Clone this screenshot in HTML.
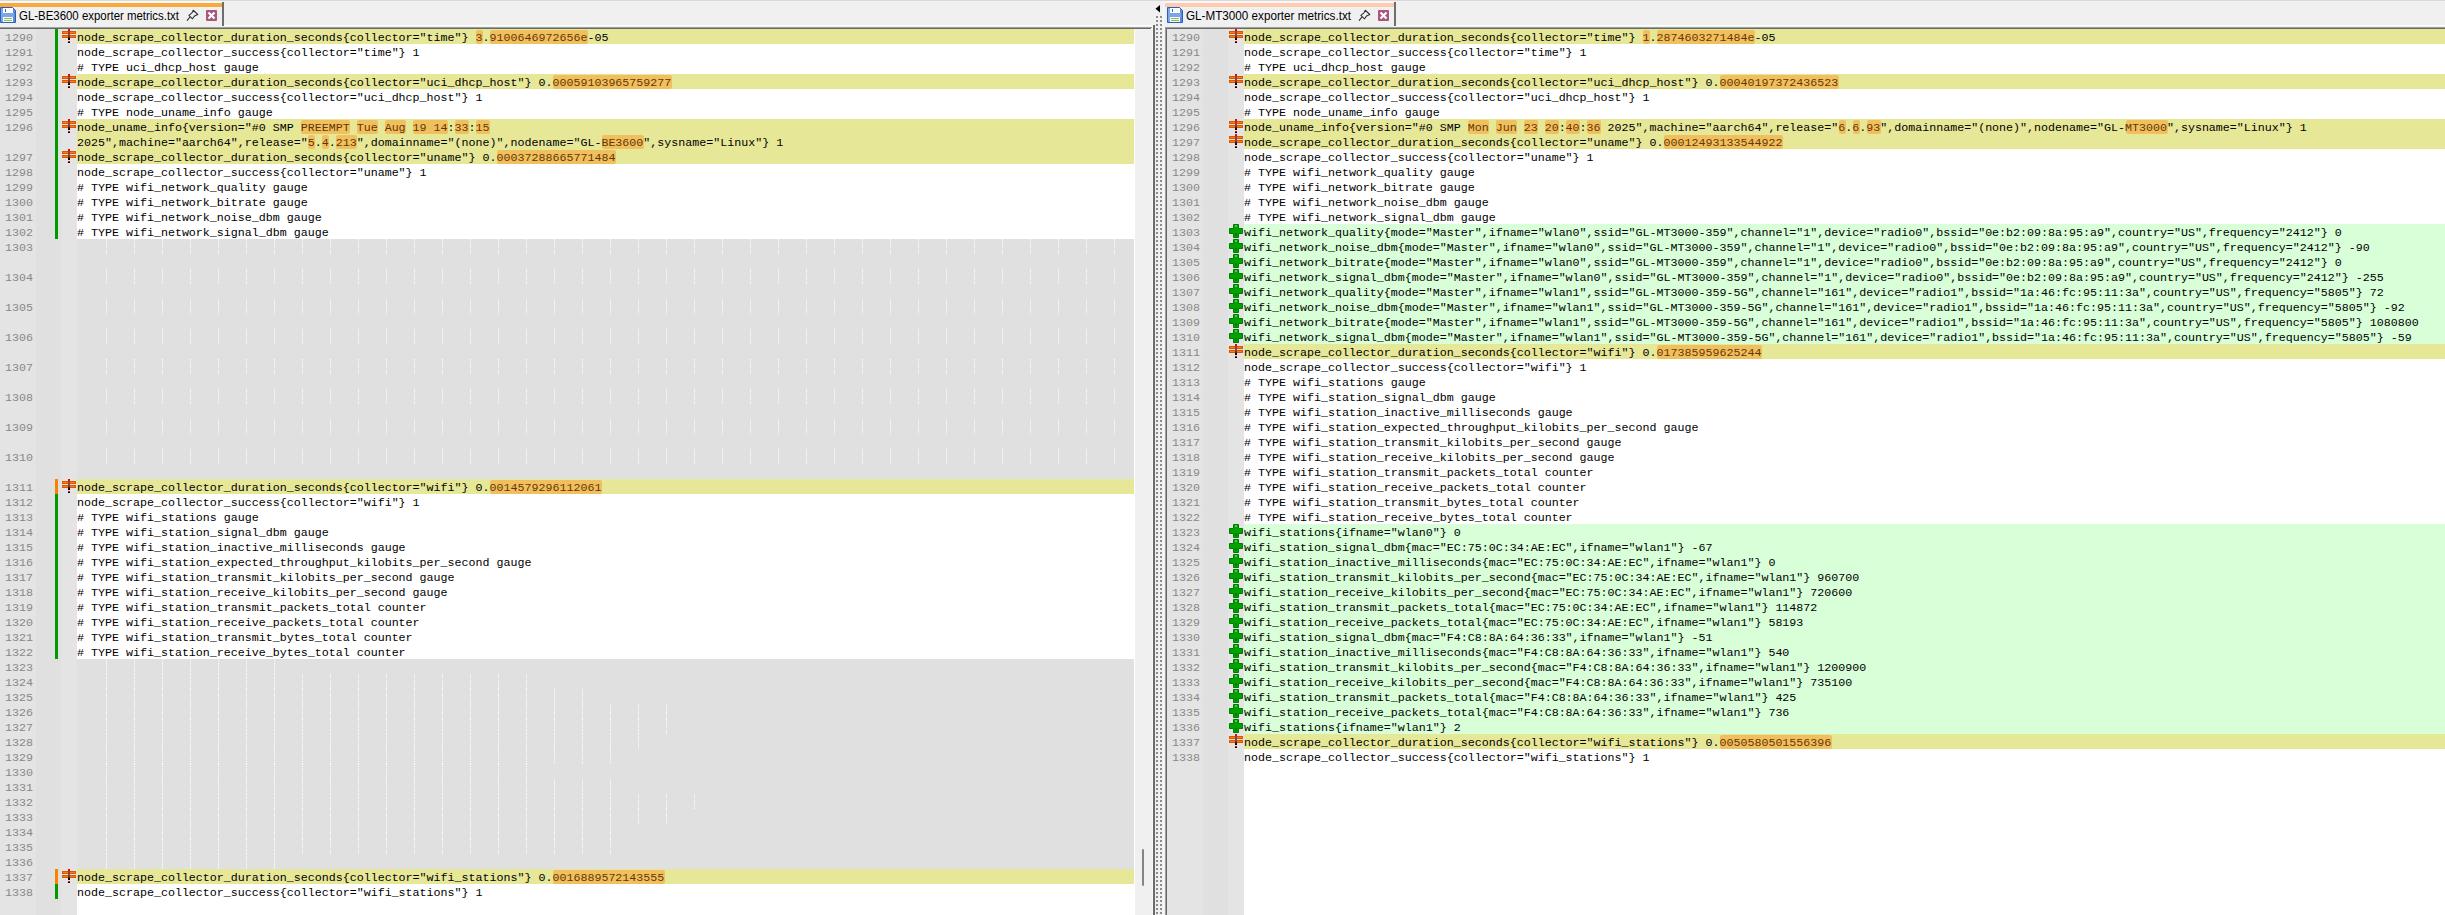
<!DOCTYPE html>
<html><head><meta charset="utf-8"><title>Compare</title><style>
html,body{margin:0;padding:0;}
body{width:2445px;height:915px;overflow:hidden;position:relative;background:#f0f0f0;font-family:"Liberation Sans",sans-serif;}
div{position:absolute;}
.tx,.ln{font-family:"Liberation Mono",monospace;font-size:11.67px;letter-spacing:-0.0031px;line-height:15px;height:15px;white-space:pre;color:#000;}
.ln{color:#888888;}
.hl{height:14px;background:rgba(255,131,6,0.39);border-radius:2px;}
.ig{width:1px;height:15px;background:repeating-linear-gradient(to bottom,#ffffff 0,#ffffff 1px,transparent 1px,transparent 2px);}
.mk{width:14px;height:3px;background:#ff7a10;box-shadow:inset 0 0 0 1px #d85800;}
.mv{width:2px;height:11px;background:linear-gradient(to bottom,#f00000 0,#f00000 12%,#9a3a48 22%,#84404c 60%,#402028 78%,#000 92%);}
.md{width:2px;height:2px;background:linear-gradient(to bottom,#ff0000 50%,#000 50%);}
.pv{width:6px;height:14px;background:#00a000;box-shadow:inset 0 0 0 1px #007800;}
.ph{width:14px;height:6px;background:#00a000;box-shadow:inset 0 0 0 1px #007800;}
.plus{position:absolute;}
.tab{font-family:"Liberation Sans",sans-serif;white-space:pre;color:#000;line-height:16px;}
.dot{width:2px;height:2px;background:#8c8c8c;}
</style></head>
<body>
<div style="left:0;top:0;width:2445px;height:1px;background:#d9d9d9"></div>
<div style="left:224px;top:25px;width:929px;height:1px;background:#ffffff"></div>
<div style="left:1396px;top:25px;width:1049px;height:1px;background:#ffffff"></div>
<div style="left:0;top:1px;width:222px;height:2px;background:#f8f8f8"></div>
<div style="left:0;top:3px;width:222px;height:4px;background:#faaa3c"></div>
<div style="left:222px;top:2px;width:2px;height:24px;background:#6e6e6e"></div>
<svg style="position:absolute;left:0px;top:7px" width="16" height="16" viewBox="0 0 16 16">
<path d="M0.5 0.5 H12.5 L15.5 3.5 V15.5 H0.5 Z" fill="#5a8ad8" stroke="#2c5fb8" stroke-width="1"/>
<rect x="1.5" y="1.5" width="1" height="13" fill="#a8c8f0"/>
<rect x="3" y="1" width="10" height="5" fill="#ffffff"/>
<rect x="5" y="2" width="1" height="3" fill="#3a6cc0"/>
<rect x="2" y="6" width="12" height="4" fill="#7aa6e8"/>
<rect x="3" y="10" width="10" height="5" fill="#ffffff"/>
<rect x="4" y="11" width="8" height="1" fill="#7cc060"/>
<rect x="4" y="13" width="8" height="1" fill="#7cc060"/>
</svg>
<div class="tab" style="left:19px;top:8px;font-size:12.5px;transform:scaleX(0.914);transform-origin:0 0">GL-BE3600 exporter metrics.txt</div>
<svg style="position:absolute;left:184px;top:7px" width="18" height="18" viewBox="0 0 18 18">
<path d="M9.25 3.25 L7.9 5.9 L4.9 8.3 L8.5 11.8 L10.6 8.9 L13.8 7.5 Z" fill="none" stroke="#303030" stroke-width="1.05" stroke-linejoin="round"/>
<path d="M5.9 10.2 L3.0 13.6" stroke="#303030" stroke-width="1.1"/>
</svg>
<svg style="position:absolute;left:206px;top:10px" width="11" height="11" viewBox="0 0 11 11">
<rect x="0" y="0" width="11" height="11" rx="1" fill="#a8567c"/>
<path d="M2.5 2.5 L8.5 8.5 M8.5 2.5 L2.5 8.5" stroke="#ffffff" stroke-width="2.2"/>
</svg>
<div style="left:1165px;top:1px;width:229px;height:2px;background:#f8f8f8"></div>
<div style="left:1165px;top:3px;width:229px;height:4px;background:#ffcab0"></div>
<div style="left:1394px;top:2px;width:2px;height:24px;background:#6e6e6e"></div>
<svg style="position:absolute;left:1167px;top:7px" width="16" height="16" viewBox="0 0 16 16">
<path d="M0.5 0.5 H12.5 L15.5 3.5 V15.5 H0.5 Z" fill="#5a8ad8" stroke="#2c5fb8" stroke-width="1"/>
<rect x="1.5" y="1.5" width="1" height="13" fill="#a8c8f0"/>
<rect x="3" y="1" width="10" height="5" fill="#ffffff"/>
<rect x="5" y="2" width="1" height="3" fill="#3a6cc0"/>
<rect x="2" y="6" width="12" height="4" fill="#7aa6e8"/>
<rect x="3" y="10" width="10" height="5" fill="#ffffff"/>
<rect x="4" y="11" width="8" height="1" fill="#7cc060"/>
<rect x="4" y="13" width="8" height="1" fill="#7cc060"/>
</svg>
<div class="tab" style="left:1186px;top:8px;font-size:12.5px;transform:scaleX(0.935);transform-origin:0 0">GL-MT3000 exporter metrics.txt</div>
<svg style="position:absolute;left:1356px;top:7px" width="18" height="18" viewBox="0 0 18 18">
<path d="M9.25 3.25 L7.9 5.9 L4.9 8.3 L8.5 11.8 L10.6 8.9 L13.8 7.5 Z" fill="none" stroke="#303030" stroke-width="1.05" stroke-linejoin="round"/>
<path d="M5.9 10.2 L3.0 13.6" stroke="#303030" stroke-width="1.1"/>
</svg>
<svg style="position:absolute;left:1378px;top:10px" width="11" height="11" viewBox="0 0 11 11">
<rect x="0" y="0" width="11" height="11" rx="1" fill="#a8567c"/>
<path d="M2.5 2.5 L8.5 8.5 M8.5 2.5 L2.5 8.5" stroke="#ffffff" stroke-width="2.2"/>
</svg>
<div style="left:0;top:27px;width:1152px;height:1px;background:#a0a0a0"></div>
<div style="left:0;top:28px;width:1151px;height:1px;background:#696969"></div>
<div style="left:1165px;top:27px;width:1280px;height:1px;background:#a0a0a0"></div>
<div style="left:1165px;top:28px;width:1280px;height:1px;background:#696969"></div>
<div style="left:1165px;top:27px;width:1px;height:888px;background:#a0a0a0"></div>
<div style="left:1166px;top:28px;width:1px;height:887px;background:#696969"></div>
<div style="left:0px;top:29px;width:36px;height:886px;background:#e4e4e4"></div>
<div style="left:36px;top:29px;width:25px;height:886px;background:#e0e0e0"></div>
<div style="left:61px;top:29px;width:16px;height:886px;background:#e4e4e4"></div>
<div style="left:77px;top:29px;width:1057px;height:886px;background:#ffffff"></div>
<div style="left:77px;top:29px;width:1057px;height:15px;background:#e7e798"></div>
<div class="ln" style="left:5px;top:31px">1290</div>
<div style="left:55px;top:29px;width:3px;height:15px;background:#009900"></div>
<div class="mk" style="left:62px;top:31px"></div><div class="mk" style="left:62px;top:35px"></div><div class="mv" style="left:68px;top:29px"></div><div class="md" style="left:68px;top:41px"></div>
<div class="tx" style="left:77px;top:31px">node_scrape_collector_duration_seconds{collector=&quot;time&quot;} 3.9100646972656e-05</div>
<div class="hl" style="left:476px;top:30px;width:7px"></div>
<div class="hl" style="left:490px;top:30px;width:98px"></div>
<div class="ln" style="left:5px;top:46px">1291</div>
<div style="left:55px;top:44px;width:3px;height:15px;background:#009900"></div>
<div class="tx" style="left:77px;top:46px">node_scrape_collector_success{collector=&quot;time&quot;} 1</div>
<div class="ln" style="left:5px;top:61px">1292</div>
<div style="left:55px;top:59px;width:3px;height:15px;background:#009900"></div>
<div class="tx" style="left:77px;top:61px"># TYPE uci_dhcp_host gauge</div>
<div style="left:77px;top:74px;width:1057px;height:15px;background:#e7e798"></div>
<div class="ln" style="left:5px;top:76px">1293</div>
<div style="left:55px;top:74px;width:3px;height:15px;background:#009900"></div>
<div class="mk" style="left:62px;top:76px"></div><div class="mk" style="left:62px;top:80px"></div><div class="mv" style="left:68px;top:74px"></div><div class="md" style="left:68px;top:86px"></div>
<div class="tx" style="left:77px;top:76px">node_scrape_collector_duration_seconds{collector=&quot;uci_dhcp_host&quot;} 0.00059103965759277</div>
<div class="hl" style="left:553px;top:75px;width:119px"></div>
<div class="ln" style="left:5px;top:91px">1294</div>
<div style="left:55px;top:89px;width:3px;height:15px;background:#009900"></div>
<div class="tx" style="left:77px;top:91px">node_scrape_collector_success{collector=&quot;uci_dhcp_host&quot;} 1</div>
<div class="ln" style="left:5px;top:106px">1295</div>
<div style="left:55px;top:104px;width:3px;height:15px;background:#009900"></div>
<div class="tx" style="left:77px;top:106px"># TYPE node_uname_info gauge</div>
<div style="left:77px;top:119px;width:1057px;height:15px;background:#e7e798"></div>
<div class="ln" style="left:5px;top:121px">1296</div>
<div style="left:55px;top:119px;width:3px;height:15px;background:#009900"></div>
<div class="mk" style="left:62px;top:121px"></div><div class="mk" style="left:62px;top:125px"></div><div class="mv" style="left:68px;top:119px"></div><div class="md" style="left:68px;top:131px"></div>
<div class="tx" style="left:77px;top:121px">node_uname_info{version=&quot;#0 SMP PREEMPT Tue Aug 19 14:33:15</div>
<div class="hl" style="left:301px;top:120px;width:49px"></div>
<div class="hl" style="left:357px;top:120px;width:21px"></div>
<div class="hl" style="left:385px;top:120px;width:21px"></div>
<div class="hl" style="left:413px;top:120px;width:35px"></div>
<div class="hl" style="left:455px;top:120px;width:14px"></div>
<div class="hl" style="left:476px;top:120px;width:14px"></div>
<div style="left:77px;top:134px;width:1057px;height:15px;background:#e7e798"></div>
<div style="left:55px;top:134px;width:3px;height:15px;background:#009900"></div>
<div class="tx" style="left:77px;top:136px">2025&quot;,machine=&quot;aarch64&quot;,release=&quot;5.4.213&quot;,domainname=&quot;(none)&quot;,nodename=&quot;GL-BE3600&quot;,sysname=&quot;Linux&quot;} 1</div>
<div class="hl" style="left:308px;top:135px;width:7px"></div>
<div class="hl" style="left:322px;top:135px;width:7px"></div>
<div class="hl" style="left:336px;top:135px;width:21px"></div>
<div class="hl" style="left:602px;top:135px;width:42px"></div>
<div style="left:77px;top:149px;width:1057px;height:15px;background:#e7e798"></div>
<div class="ln" style="left:5px;top:151px">1297</div>
<div style="left:55px;top:149px;width:3px;height:15px;background:#009900"></div>
<div class="mk" style="left:62px;top:151px"></div><div class="mk" style="left:62px;top:155px"></div><div class="mv" style="left:68px;top:149px"></div><div class="md" style="left:68px;top:161px"></div>
<div class="tx" style="left:77px;top:151px">node_scrape_collector_duration_seconds{collector=&quot;uname&quot;} 0.00037288665771484</div>
<div class="hl" style="left:497px;top:150px;width:119px"></div>
<div class="ln" style="left:5px;top:166px">1298</div>
<div style="left:55px;top:164px;width:3px;height:15px;background:#009900"></div>
<div class="tx" style="left:77px;top:166px">node_scrape_collector_success{collector=&quot;uname&quot;} 1</div>
<div class="ln" style="left:5px;top:181px">1299</div>
<div style="left:55px;top:179px;width:3px;height:15px;background:#009900"></div>
<div class="tx" style="left:77px;top:181px"># TYPE wifi_network_quality gauge</div>
<div class="ln" style="left:5px;top:196px">1300</div>
<div style="left:55px;top:194px;width:3px;height:15px;background:#009900"></div>
<div class="tx" style="left:77px;top:196px"># TYPE wifi_network_bitrate gauge</div>
<div class="ln" style="left:5px;top:211px">1301</div>
<div style="left:55px;top:209px;width:3px;height:15px;background:#009900"></div>
<div class="tx" style="left:77px;top:211px"># TYPE wifi_network_noise_dbm gauge</div>
<div class="ln" style="left:5px;top:226px">1302</div>
<div style="left:55px;top:224px;width:3px;height:15px;background:#009900"></div>
<div class="tx" style="left:77px;top:226px"># TYPE wifi_network_signal_dbm gauge</div>
<div style="left:77px;top:239px;width:1057px;height:15px;background:#e0e0e0"></div>
<div class="ig" style="left:106px;top:239px"></div>
<div class="ig" style="left:134px;top:239px"></div>
<div class="ig" style="left:162px;top:239px"></div>
<div class="ig" style="left:190px;top:239px"></div>
<div class="ig" style="left:218px;top:239px"></div>
<div class="ig" style="left:246px;top:239px"></div>
<div class="ig" style="left:274px;top:239px"></div>
<div class="ig" style="left:302px;top:239px"></div>
<div class="ig" style="left:330px;top:239px"></div>
<div class="ig" style="left:358px;top:239px"></div>
<div class="ig" style="left:386px;top:239px"></div>
<div class="ig" style="left:414px;top:239px"></div>
<div class="ig" style="left:442px;top:239px"></div>
<div class="ig" style="left:470px;top:239px"></div>
<div class="ig" style="left:498px;top:239px"></div>
<div class="ig" style="left:526px;top:239px"></div>
<div class="ig" style="left:554px;top:239px"></div>
<div class="ig" style="left:582px;top:239px"></div>
<div class="ig" style="left:610px;top:239px"></div>
<div class="ig" style="left:638px;top:239px"></div>
<div class="ig" style="left:666px;top:239px"></div>
<div class="ig" style="left:694px;top:239px"></div>
<div class="ig" style="left:722px;top:239px"></div>
<div class="ig" style="left:750px;top:239px"></div>
<div class="ig" style="left:778px;top:239px"></div>
<div class="ig" style="left:806px;top:239px"></div>
<div class="ig" style="left:834px;top:239px"></div>
<div class="ig" style="left:862px;top:239px"></div>
<div class="ig" style="left:890px;top:239px"></div>
<div class="ig" style="left:918px;top:239px"></div>
<div class="ig" style="left:946px;top:239px"></div>
<div class="ig" style="left:974px;top:239px"></div>
<div class="ig" style="left:1002px;top:239px"></div>
<div class="ig" style="left:1030px;top:239px"></div>
<div class="ig" style="left:1058px;top:239px"></div>
<div class="ig" style="left:1086px;top:239px"></div>
<div class="ig" style="left:1114px;top:239px"></div>
<div class="ln" style="left:5px;top:241px">1303</div>
<div style="left:77px;top:254px;width:1057px;height:15px;background:#e0e0e0"></div>
<div style="left:77px;top:269px;width:1057px;height:15px;background:#e0e0e0"></div>
<div class="ig" style="left:106px;top:269px"></div>
<div class="ig" style="left:134px;top:269px"></div>
<div class="ig" style="left:162px;top:269px"></div>
<div class="ig" style="left:190px;top:269px"></div>
<div class="ig" style="left:218px;top:269px"></div>
<div class="ig" style="left:246px;top:269px"></div>
<div class="ig" style="left:274px;top:269px"></div>
<div class="ig" style="left:302px;top:269px"></div>
<div class="ig" style="left:330px;top:269px"></div>
<div class="ig" style="left:358px;top:269px"></div>
<div class="ig" style="left:386px;top:269px"></div>
<div class="ig" style="left:414px;top:269px"></div>
<div class="ig" style="left:442px;top:269px"></div>
<div class="ig" style="left:470px;top:269px"></div>
<div class="ig" style="left:498px;top:269px"></div>
<div class="ig" style="left:526px;top:269px"></div>
<div class="ig" style="left:554px;top:269px"></div>
<div class="ig" style="left:582px;top:269px"></div>
<div class="ig" style="left:610px;top:269px"></div>
<div class="ig" style="left:638px;top:269px"></div>
<div class="ig" style="left:666px;top:269px"></div>
<div class="ig" style="left:694px;top:269px"></div>
<div class="ig" style="left:722px;top:269px"></div>
<div class="ig" style="left:750px;top:269px"></div>
<div class="ig" style="left:778px;top:269px"></div>
<div class="ig" style="left:806px;top:269px"></div>
<div class="ig" style="left:834px;top:269px"></div>
<div class="ig" style="left:862px;top:269px"></div>
<div class="ig" style="left:890px;top:269px"></div>
<div class="ig" style="left:918px;top:269px"></div>
<div class="ig" style="left:946px;top:269px"></div>
<div class="ig" style="left:974px;top:269px"></div>
<div class="ig" style="left:1002px;top:269px"></div>
<div class="ig" style="left:1030px;top:269px"></div>
<div class="ig" style="left:1058px;top:269px"></div>
<div class="ig" style="left:1086px;top:269px"></div>
<div class="ig" style="left:1114px;top:269px"></div>
<div class="ln" style="left:5px;top:271px">1304</div>
<div style="left:77px;top:284px;width:1057px;height:15px;background:#e0e0e0"></div>
<div style="left:77px;top:299px;width:1057px;height:15px;background:#e0e0e0"></div>
<div class="ig" style="left:106px;top:299px"></div>
<div class="ig" style="left:134px;top:299px"></div>
<div class="ig" style="left:162px;top:299px"></div>
<div class="ig" style="left:190px;top:299px"></div>
<div class="ig" style="left:218px;top:299px"></div>
<div class="ig" style="left:246px;top:299px"></div>
<div class="ig" style="left:274px;top:299px"></div>
<div class="ig" style="left:302px;top:299px"></div>
<div class="ig" style="left:330px;top:299px"></div>
<div class="ig" style="left:358px;top:299px"></div>
<div class="ig" style="left:386px;top:299px"></div>
<div class="ig" style="left:414px;top:299px"></div>
<div class="ig" style="left:442px;top:299px"></div>
<div class="ig" style="left:470px;top:299px"></div>
<div class="ig" style="left:498px;top:299px"></div>
<div class="ig" style="left:526px;top:299px"></div>
<div class="ig" style="left:554px;top:299px"></div>
<div class="ig" style="left:582px;top:299px"></div>
<div class="ig" style="left:610px;top:299px"></div>
<div class="ig" style="left:638px;top:299px"></div>
<div class="ig" style="left:666px;top:299px"></div>
<div class="ig" style="left:694px;top:299px"></div>
<div class="ig" style="left:722px;top:299px"></div>
<div class="ig" style="left:750px;top:299px"></div>
<div class="ig" style="left:778px;top:299px"></div>
<div class="ig" style="left:806px;top:299px"></div>
<div class="ig" style="left:834px;top:299px"></div>
<div class="ig" style="left:862px;top:299px"></div>
<div class="ig" style="left:890px;top:299px"></div>
<div class="ig" style="left:918px;top:299px"></div>
<div class="ig" style="left:946px;top:299px"></div>
<div class="ig" style="left:974px;top:299px"></div>
<div class="ig" style="left:1002px;top:299px"></div>
<div class="ig" style="left:1030px;top:299px"></div>
<div class="ig" style="left:1058px;top:299px"></div>
<div class="ig" style="left:1086px;top:299px"></div>
<div class="ig" style="left:1114px;top:299px"></div>
<div class="ln" style="left:5px;top:301px">1305</div>
<div style="left:77px;top:314px;width:1057px;height:15px;background:#e0e0e0"></div>
<div style="left:77px;top:329px;width:1057px;height:15px;background:#e0e0e0"></div>
<div class="ig" style="left:106px;top:329px"></div>
<div class="ig" style="left:134px;top:329px"></div>
<div class="ig" style="left:162px;top:329px"></div>
<div class="ig" style="left:190px;top:329px"></div>
<div class="ig" style="left:218px;top:329px"></div>
<div class="ig" style="left:246px;top:329px"></div>
<div class="ig" style="left:274px;top:329px"></div>
<div class="ig" style="left:302px;top:329px"></div>
<div class="ig" style="left:330px;top:329px"></div>
<div class="ig" style="left:358px;top:329px"></div>
<div class="ig" style="left:386px;top:329px"></div>
<div class="ig" style="left:414px;top:329px"></div>
<div class="ig" style="left:442px;top:329px"></div>
<div class="ig" style="left:470px;top:329px"></div>
<div class="ig" style="left:498px;top:329px"></div>
<div class="ig" style="left:526px;top:329px"></div>
<div class="ig" style="left:554px;top:329px"></div>
<div class="ig" style="left:582px;top:329px"></div>
<div class="ig" style="left:610px;top:329px"></div>
<div class="ig" style="left:638px;top:329px"></div>
<div class="ig" style="left:666px;top:329px"></div>
<div class="ig" style="left:694px;top:329px"></div>
<div class="ig" style="left:722px;top:329px"></div>
<div class="ig" style="left:750px;top:329px"></div>
<div class="ig" style="left:778px;top:329px"></div>
<div class="ig" style="left:806px;top:329px"></div>
<div class="ig" style="left:834px;top:329px"></div>
<div class="ig" style="left:862px;top:329px"></div>
<div class="ig" style="left:890px;top:329px"></div>
<div class="ig" style="left:918px;top:329px"></div>
<div class="ig" style="left:946px;top:329px"></div>
<div class="ig" style="left:974px;top:329px"></div>
<div class="ig" style="left:1002px;top:329px"></div>
<div class="ig" style="left:1030px;top:329px"></div>
<div class="ig" style="left:1058px;top:329px"></div>
<div class="ig" style="left:1086px;top:329px"></div>
<div class="ig" style="left:1114px;top:329px"></div>
<div class="ln" style="left:5px;top:331px">1306</div>
<div style="left:77px;top:344px;width:1057px;height:15px;background:#e0e0e0"></div>
<div style="left:77px;top:359px;width:1057px;height:15px;background:#e0e0e0"></div>
<div class="ig" style="left:106px;top:359px"></div>
<div class="ig" style="left:134px;top:359px"></div>
<div class="ig" style="left:162px;top:359px"></div>
<div class="ig" style="left:190px;top:359px"></div>
<div class="ig" style="left:218px;top:359px"></div>
<div class="ig" style="left:246px;top:359px"></div>
<div class="ig" style="left:274px;top:359px"></div>
<div class="ig" style="left:302px;top:359px"></div>
<div class="ig" style="left:330px;top:359px"></div>
<div class="ig" style="left:358px;top:359px"></div>
<div class="ig" style="left:386px;top:359px"></div>
<div class="ig" style="left:414px;top:359px"></div>
<div class="ig" style="left:442px;top:359px"></div>
<div class="ig" style="left:470px;top:359px"></div>
<div class="ig" style="left:498px;top:359px"></div>
<div class="ig" style="left:526px;top:359px"></div>
<div class="ig" style="left:554px;top:359px"></div>
<div class="ig" style="left:582px;top:359px"></div>
<div class="ig" style="left:610px;top:359px"></div>
<div class="ig" style="left:638px;top:359px"></div>
<div class="ig" style="left:666px;top:359px"></div>
<div class="ig" style="left:694px;top:359px"></div>
<div class="ig" style="left:722px;top:359px"></div>
<div class="ig" style="left:750px;top:359px"></div>
<div class="ig" style="left:778px;top:359px"></div>
<div class="ig" style="left:806px;top:359px"></div>
<div class="ig" style="left:834px;top:359px"></div>
<div class="ig" style="left:862px;top:359px"></div>
<div class="ig" style="left:890px;top:359px"></div>
<div class="ig" style="left:918px;top:359px"></div>
<div class="ig" style="left:946px;top:359px"></div>
<div class="ig" style="left:974px;top:359px"></div>
<div class="ig" style="left:1002px;top:359px"></div>
<div class="ig" style="left:1030px;top:359px"></div>
<div class="ig" style="left:1058px;top:359px"></div>
<div class="ig" style="left:1086px;top:359px"></div>
<div class="ig" style="left:1114px;top:359px"></div>
<div class="ln" style="left:5px;top:361px">1307</div>
<div style="left:77px;top:374px;width:1057px;height:15px;background:#e0e0e0"></div>
<div style="left:77px;top:389px;width:1057px;height:15px;background:#e0e0e0"></div>
<div class="ig" style="left:106px;top:389px"></div>
<div class="ig" style="left:134px;top:389px"></div>
<div class="ig" style="left:162px;top:389px"></div>
<div class="ig" style="left:190px;top:389px"></div>
<div class="ig" style="left:218px;top:389px"></div>
<div class="ig" style="left:246px;top:389px"></div>
<div class="ig" style="left:274px;top:389px"></div>
<div class="ig" style="left:302px;top:389px"></div>
<div class="ig" style="left:330px;top:389px"></div>
<div class="ig" style="left:358px;top:389px"></div>
<div class="ig" style="left:386px;top:389px"></div>
<div class="ig" style="left:414px;top:389px"></div>
<div class="ig" style="left:442px;top:389px"></div>
<div class="ig" style="left:470px;top:389px"></div>
<div class="ig" style="left:498px;top:389px"></div>
<div class="ig" style="left:526px;top:389px"></div>
<div class="ig" style="left:554px;top:389px"></div>
<div class="ig" style="left:582px;top:389px"></div>
<div class="ig" style="left:610px;top:389px"></div>
<div class="ig" style="left:638px;top:389px"></div>
<div class="ig" style="left:666px;top:389px"></div>
<div class="ig" style="left:694px;top:389px"></div>
<div class="ig" style="left:722px;top:389px"></div>
<div class="ig" style="left:750px;top:389px"></div>
<div class="ig" style="left:778px;top:389px"></div>
<div class="ig" style="left:806px;top:389px"></div>
<div class="ig" style="left:834px;top:389px"></div>
<div class="ig" style="left:862px;top:389px"></div>
<div class="ig" style="left:890px;top:389px"></div>
<div class="ig" style="left:918px;top:389px"></div>
<div class="ig" style="left:946px;top:389px"></div>
<div class="ig" style="left:974px;top:389px"></div>
<div class="ig" style="left:1002px;top:389px"></div>
<div class="ig" style="left:1030px;top:389px"></div>
<div class="ig" style="left:1058px;top:389px"></div>
<div class="ig" style="left:1086px;top:389px"></div>
<div class="ig" style="left:1114px;top:389px"></div>
<div class="ln" style="left:5px;top:391px">1308</div>
<div style="left:77px;top:404px;width:1057px;height:15px;background:#e0e0e0"></div>
<div style="left:77px;top:419px;width:1057px;height:15px;background:#e0e0e0"></div>
<div class="ig" style="left:106px;top:419px"></div>
<div class="ig" style="left:134px;top:419px"></div>
<div class="ig" style="left:162px;top:419px"></div>
<div class="ig" style="left:190px;top:419px"></div>
<div class="ig" style="left:218px;top:419px"></div>
<div class="ig" style="left:246px;top:419px"></div>
<div class="ig" style="left:274px;top:419px"></div>
<div class="ig" style="left:302px;top:419px"></div>
<div class="ig" style="left:330px;top:419px"></div>
<div class="ig" style="left:358px;top:419px"></div>
<div class="ig" style="left:386px;top:419px"></div>
<div class="ig" style="left:414px;top:419px"></div>
<div class="ig" style="left:442px;top:419px"></div>
<div class="ig" style="left:470px;top:419px"></div>
<div class="ig" style="left:498px;top:419px"></div>
<div class="ig" style="left:526px;top:419px"></div>
<div class="ig" style="left:554px;top:419px"></div>
<div class="ig" style="left:582px;top:419px"></div>
<div class="ig" style="left:610px;top:419px"></div>
<div class="ig" style="left:638px;top:419px"></div>
<div class="ig" style="left:666px;top:419px"></div>
<div class="ig" style="left:694px;top:419px"></div>
<div class="ig" style="left:722px;top:419px"></div>
<div class="ig" style="left:750px;top:419px"></div>
<div class="ig" style="left:778px;top:419px"></div>
<div class="ig" style="left:806px;top:419px"></div>
<div class="ig" style="left:834px;top:419px"></div>
<div class="ig" style="left:862px;top:419px"></div>
<div class="ig" style="left:890px;top:419px"></div>
<div class="ig" style="left:918px;top:419px"></div>
<div class="ig" style="left:946px;top:419px"></div>
<div class="ig" style="left:974px;top:419px"></div>
<div class="ig" style="left:1002px;top:419px"></div>
<div class="ig" style="left:1030px;top:419px"></div>
<div class="ig" style="left:1058px;top:419px"></div>
<div class="ig" style="left:1086px;top:419px"></div>
<div class="ig" style="left:1114px;top:419px"></div>
<div class="ln" style="left:5px;top:421px">1309</div>
<div style="left:77px;top:434px;width:1057px;height:15px;background:#e0e0e0"></div>
<div style="left:77px;top:449px;width:1057px;height:15px;background:#e0e0e0"></div>
<div class="ig" style="left:106px;top:449px"></div>
<div class="ig" style="left:134px;top:449px"></div>
<div class="ig" style="left:162px;top:449px"></div>
<div class="ig" style="left:190px;top:449px"></div>
<div class="ig" style="left:218px;top:449px"></div>
<div class="ig" style="left:246px;top:449px"></div>
<div class="ig" style="left:274px;top:449px"></div>
<div class="ig" style="left:302px;top:449px"></div>
<div class="ig" style="left:330px;top:449px"></div>
<div class="ig" style="left:358px;top:449px"></div>
<div class="ig" style="left:386px;top:449px"></div>
<div class="ig" style="left:414px;top:449px"></div>
<div class="ig" style="left:442px;top:449px"></div>
<div class="ig" style="left:470px;top:449px"></div>
<div class="ig" style="left:498px;top:449px"></div>
<div class="ig" style="left:526px;top:449px"></div>
<div class="ig" style="left:554px;top:449px"></div>
<div class="ig" style="left:582px;top:449px"></div>
<div class="ig" style="left:610px;top:449px"></div>
<div class="ig" style="left:638px;top:449px"></div>
<div class="ig" style="left:666px;top:449px"></div>
<div class="ig" style="left:694px;top:449px"></div>
<div class="ig" style="left:722px;top:449px"></div>
<div class="ig" style="left:750px;top:449px"></div>
<div class="ig" style="left:778px;top:449px"></div>
<div class="ig" style="left:806px;top:449px"></div>
<div class="ig" style="left:834px;top:449px"></div>
<div class="ig" style="left:862px;top:449px"></div>
<div class="ig" style="left:890px;top:449px"></div>
<div class="ig" style="left:918px;top:449px"></div>
<div class="ig" style="left:946px;top:449px"></div>
<div class="ig" style="left:974px;top:449px"></div>
<div class="ig" style="left:1002px;top:449px"></div>
<div class="ig" style="left:1030px;top:449px"></div>
<div class="ig" style="left:1058px;top:449px"></div>
<div class="ig" style="left:1086px;top:449px"></div>
<div class="ig" style="left:1114px;top:449px"></div>
<div class="ln" style="left:5px;top:451px">1310</div>
<div style="left:77px;top:464px;width:1057px;height:15px;background:#e0e0e0"></div>
<div style="left:77px;top:479px;width:1057px;height:15px;background:#e7e798"></div>
<div class="ln" style="left:5px;top:481px">1311</div>
<div style="left:55px;top:479px;width:3px;height:15px;background:#ff8000"></div>
<div class="mk" style="left:62px;top:481px"></div><div class="mk" style="left:62px;top:485px"></div><div class="mv" style="left:68px;top:479px"></div><div class="md" style="left:68px;top:491px"></div>
<div class="tx" style="left:77px;top:481px">node_scrape_collector_duration_seconds{collector=&quot;wifi&quot;} 0.0014579296112061</div>
<div class="hl" style="left:490px;top:480px;width:112px"></div>
<div class="ln" style="left:5px;top:496px">1312</div>
<div style="left:55px;top:494px;width:3px;height:15px;background:#009900"></div>
<div class="tx" style="left:77px;top:496px">node_scrape_collector_success{collector=&quot;wifi&quot;} 1</div>
<div class="ln" style="left:5px;top:511px">1313</div>
<div style="left:55px;top:509px;width:3px;height:15px;background:#009900"></div>
<div class="tx" style="left:77px;top:511px"># TYPE wifi_stations gauge</div>
<div class="ln" style="left:5px;top:526px">1314</div>
<div style="left:55px;top:524px;width:3px;height:15px;background:#009900"></div>
<div class="tx" style="left:77px;top:526px"># TYPE wifi_station_signal_dbm gauge</div>
<div class="ln" style="left:5px;top:541px">1315</div>
<div style="left:55px;top:539px;width:3px;height:15px;background:#009900"></div>
<div class="tx" style="left:77px;top:541px"># TYPE wifi_station_inactive_milliseconds gauge</div>
<div class="ln" style="left:5px;top:556px">1316</div>
<div style="left:55px;top:554px;width:3px;height:15px;background:#009900"></div>
<div class="tx" style="left:77px;top:556px"># TYPE wifi_station_expected_throughput_kilobits_per_second gauge</div>
<div class="ln" style="left:5px;top:571px">1317</div>
<div style="left:55px;top:569px;width:3px;height:15px;background:#009900"></div>
<div class="tx" style="left:77px;top:571px"># TYPE wifi_station_transmit_kilobits_per_second gauge</div>
<div class="ln" style="left:5px;top:586px">1318</div>
<div style="left:55px;top:584px;width:3px;height:15px;background:#009900"></div>
<div class="tx" style="left:77px;top:586px"># TYPE wifi_station_receive_kilobits_per_second gauge</div>
<div class="ln" style="left:5px;top:601px">1319</div>
<div style="left:55px;top:599px;width:3px;height:15px;background:#009900"></div>
<div class="tx" style="left:77px;top:601px"># TYPE wifi_station_transmit_packets_total counter</div>
<div class="ln" style="left:5px;top:616px">1320</div>
<div style="left:55px;top:614px;width:3px;height:15px;background:#009900"></div>
<div class="tx" style="left:77px;top:616px"># TYPE wifi_station_receive_packets_total counter</div>
<div class="ln" style="left:5px;top:631px">1321</div>
<div style="left:55px;top:629px;width:3px;height:15px;background:#009900"></div>
<div class="tx" style="left:77px;top:631px"># TYPE wifi_station_transmit_bytes_total counter</div>
<div class="ln" style="left:5px;top:646px">1322</div>
<div style="left:55px;top:644px;width:3px;height:15px;background:#009900"></div>
<div class="tx" style="left:77px;top:646px"># TYPE wifi_station_receive_bytes_total counter</div>
<div style="left:77px;top:659px;width:1057px;height:15px;background:#e0e0e0"></div>
<div class="ig" style="left:106px;top:659px"></div>
<div class="ig" style="left:134px;top:659px"></div>
<div class="ig" style="left:162px;top:659px"></div>
<div class="ig" style="left:190px;top:659px"></div>
<div class="ig" style="left:218px;top:659px"></div>
<div class="ig" style="left:246px;top:659px"></div>
<div class="ig" style="left:274px;top:659px"></div>
<div class="ln" style="left:5px;top:661px">1323</div>
<div style="left:77px;top:674px;width:1057px;height:15px;background:#e0e0e0"></div>
<div class="ig" style="left:106px;top:674px"></div>
<div class="ig" style="left:134px;top:674px"></div>
<div class="ig" style="left:162px;top:674px"></div>
<div class="ig" style="left:190px;top:674px"></div>
<div class="ig" style="left:218px;top:674px"></div>
<div class="ig" style="left:246px;top:674px"></div>
<div class="ig" style="left:274px;top:674px"></div>
<div class="ig" style="left:302px;top:674px"></div>
<div class="ig" style="left:330px;top:674px"></div>
<div class="ig" style="left:358px;top:674px"></div>
<div class="ig" style="left:386px;top:674px"></div>
<div class="ig" style="left:414px;top:674px"></div>
<div class="ig" style="left:442px;top:674px"></div>
<div class="ig" style="left:470px;top:674px"></div>
<div class="ig" style="left:498px;top:674px"></div>
<div class="ig" style="left:526px;top:674px"></div>
<div class="ln" style="left:5px;top:676px">1324</div>
<div style="left:77px;top:689px;width:1057px;height:15px;background:#e0e0e0"></div>
<div class="ig" style="left:106px;top:689px"></div>
<div class="ig" style="left:134px;top:689px"></div>
<div class="ig" style="left:162px;top:689px"></div>
<div class="ig" style="left:190px;top:689px"></div>
<div class="ig" style="left:218px;top:689px"></div>
<div class="ig" style="left:246px;top:689px"></div>
<div class="ig" style="left:274px;top:689px"></div>
<div class="ig" style="left:302px;top:689px"></div>
<div class="ig" style="left:330px;top:689px"></div>
<div class="ig" style="left:358px;top:689px"></div>
<div class="ig" style="left:386px;top:689px"></div>
<div class="ig" style="left:414px;top:689px"></div>
<div class="ig" style="left:442px;top:689px"></div>
<div class="ig" style="left:470px;top:689px"></div>
<div class="ig" style="left:498px;top:689px"></div>
<div class="ig" style="left:526px;top:689px"></div>
<div class="ig" style="left:554px;top:689px"></div>
<div class="ig" style="left:582px;top:689px"></div>
<div class="ln" style="left:5px;top:691px">1325</div>
<div style="left:77px;top:704px;width:1057px;height:15px;background:#e0e0e0"></div>
<div class="ig" style="left:106px;top:704px"></div>
<div class="ig" style="left:134px;top:704px"></div>
<div class="ig" style="left:162px;top:704px"></div>
<div class="ig" style="left:190px;top:704px"></div>
<div class="ig" style="left:218px;top:704px"></div>
<div class="ig" style="left:246px;top:704px"></div>
<div class="ig" style="left:274px;top:704px"></div>
<div class="ig" style="left:302px;top:704px"></div>
<div class="ig" style="left:330px;top:704px"></div>
<div class="ig" style="left:358px;top:704px"></div>
<div class="ig" style="left:386px;top:704px"></div>
<div class="ig" style="left:414px;top:704px"></div>
<div class="ig" style="left:442px;top:704px"></div>
<div class="ig" style="left:470px;top:704px"></div>
<div class="ig" style="left:498px;top:704px"></div>
<div class="ig" style="left:526px;top:704px"></div>
<div class="ig" style="left:554px;top:704px"></div>
<div class="ig" style="left:582px;top:704px"></div>
<div class="ig" style="left:610px;top:704px"></div>
<div class="ig" style="left:638px;top:704px"></div>
<div class="ig" style="left:666px;top:704px"></div>
<div class="ln" style="left:5px;top:706px">1326</div>
<div style="left:77px;top:719px;width:1057px;height:15px;background:#e0e0e0"></div>
<div class="ig" style="left:106px;top:719px"></div>
<div class="ig" style="left:134px;top:719px"></div>
<div class="ig" style="left:162px;top:719px"></div>
<div class="ig" style="left:190px;top:719px"></div>
<div class="ig" style="left:218px;top:719px"></div>
<div class="ig" style="left:246px;top:719px"></div>
<div class="ig" style="left:274px;top:719px"></div>
<div class="ig" style="left:302px;top:719px"></div>
<div class="ig" style="left:330px;top:719px"></div>
<div class="ig" style="left:358px;top:719px"></div>
<div class="ig" style="left:386px;top:719px"></div>
<div class="ig" style="left:414px;top:719px"></div>
<div class="ig" style="left:442px;top:719px"></div>
<div class="ig" style="left:470px;top:719px"></div>
<div class="ig" style="left:498px;top:719px"></div>
<div class="ig" style="left:526px;top:719px"></div>
<div class="ig" style="left:554px;top:719px"></div>
<div class="ig" style="left:582px;top:719px"></div>
<div class="ig" style="left:610px;top:719px"></div>
<div class="ig" style="left:638px;top:719px"></div>
<div class="ig" style="left:666px;top:719px"></div>
<div class="ln" style="left:5px;top:721px">1327</div>
<div style="left:77px;top:734px;width:1057px;height:15px;background:#e0e0e0"></div>
<div class="ig" style="left:106px;top:734px"></div>
<div class="ig" style="left:134px;top:734px"></div>
<div class="ig" style="left:162px;top:734px"></div>
<div class="ig" style="left:190px;top:734px"></div>
<div class="ig" style="left:218px;top:734px"></div>
<div class="ig" style="left:246px;top:734px"></div>
<div class="ig" style="left:274px;top:734px"></div>
<div class="ig" style="left:302px;top:734px"></div>
<div class="ig" style="left:330px;top:734px"></div>
<div class="ig" style="left:358px;top:734px"></div>
<div class="ig" style="left:386px;top:734px"></div>
<div class="ig" style="left:414px;top:734px"></div>
<div class="ig" style="left:442px;top:734px"></div>
<div class="ig" style="left:470px;top:734px"></div>
<div class="ig" style="left:498px;top:734px"></div>
<div class="ig" style="left:526px;top:734px"></div>
<div class="ig" style="left:554px;top:734px"></div>
<div class="ig" style="left:582px;top:734px"></div>
<div class="ig" style="left:610px;top:734px"></div>
<div class="ig" style="left:638px;top:734px"></div>
<div class="ln" style="left:5px;top:736px">1328</div>
<div style="left:77px;top:749px;width:1057px;height:15px;background:#e0e0e0"></div>
<div class="ig" style="left:106px;top:749px"></div>
<div class="ig" style="left:134px;top:749px"></div>
<div class="ig" style="left:162px;top:749px"></div>
<div class="ig" style="left:190px;top:749px"></div>
<div class="ig" style="left:218px;top:749px"></div>
<div class="ig" style="left:246px;top:749px"></div>
<div class="ig" style="left:274px;top:749px"></div>
<div class="ig" style="left:302px;top:749px"></div>
<div class="ig" style="left:330px;top:749px"></div>
<div class="ig" style="left:358px;top:749px"></div>
<div class="ig" style="left:386px;top:749px"></div>
<div class="ig" style="left:414px;top:749px"></div>
<div class="ig" style="left:442px;top:749px"></div>
<div class="ig" style="left:470px;top:749px"></div>
<div class="ig" style="left:498px;top:749px"></div>
<div class="ig" style="left:526px;top:749px"></div>
<div class="ig" style="left:554px;top:749px"></div>
<div class="ig" style="left:582px;top:749px"></div>
<div class="ig" style="left:610px;top:749px"></div>
<div class="ln" style="left:5px;top:751px">1329</div>
<div style="left:77px;top:764px;width:1057px;height:15px;background:#e0e0e0"></div>
<div class="ig" style="left:106px;top:764px"></div>
<div class="ig" style="left:134px;top:764px"></div>
<div class="ig" style="left:162px;top:764px"></div>
<div class="ig" style="left:190px;top:764px"></div>
<div class="ig" style="left:218px;top:764px"></div>
<div class="ig" style="left:246px;top:764px"></div>
<div class="ig" style="left:274px;top:764px"></div>
<div class="ig" style="left:302px;top:764px"></div>
<div class="ig" style="left:330px;top:764px"></div>
<div class="ig" style="left:358px;top:764px"></div>
<div class="ig" style="left:386px;top:764px"></div>
<div class="ig" style="left:414px;top:764px"></div>
<div class="ig" style="left:442px;top:764px"></div>
<div class="ig" style="left:470px;top:764px"></div>
<div class="ig" style="left:498px;top:764px"></div>
<div class="ig" style="left:526px;top:764px"></div>
<div class="ln" style="left:5px;top:766px">1330</div>
<div style="left:77px;top:779px;width:1057px;height:15px;background:#e0e0e0"></div>
<div class="ig" style="left:106px;top:779px"></div>
<div class="ig" style="left:134px;top:779px"></div>
<div class="ig" style="left:162px;top:779px"></div>
<div class="ig" style="left:190px;top:779px"></div>
<div class="ig" style="left:218px;top:779px"></div>
<div class="ig" style="left:246px;top:779px"></div>
<div class="ig" style="left:274px;top:779px"></div>
<div class="ig" style="left:302px;top:779px"></div>
<div class="ig" style="left:330px;top:779px"></div>
<div class="ig" style="left:358px;top:779px"></div>
<div class="ig" style="left:386px;top:779px"></div>
<div class="ig" style="left:414px;top:779px"></div>
<div class="ig" style="left:442px;top:779px"></div>
<div class="ig" style="left:470px;top:779px"></div>
<div class="ig" style="left:498px;top:779px"></div>
<div class="ig" style="left:526px;top:779px"></div>
<div class="ig" style="left:554px;top:779px"></div>
<div class="ig" style="left:582px;top:779px"></div>
<div class="ig" style="left:610px;top:779px"></div>
<div class="ln" style="left:5px;top:781px">1331</div>
<div style="left:77px;top:794px;width:1057px;height:15px;background:#e0e0e0"></div>
<div class="ig" style="left:106px;top:794px"></div>
<div class="ig" style="left:134px;top:794px"></div>
<div class="ig" style="left:162px;top:794px"></div>
<div class="ig" style="left:190px;top:794px"></div>
<div class="ig" style="left:218px;top:794px"></div>
<div class="ig" style="left:246px;top:794px"></div>
<div class="ig" style="left:274px;top:794px"></div>
<div class="ig" style="left:302px;top:794px"></div>
<div class="ig" style="left:330px;top:794px"></div>
<div class="ig" style="left:358px;top:794px"></div>
<div class="ig" style="left:386px;top:794px"></div>
<div class="ig" style="left:414px;top:794px"></div>
<div class="ig" style="left:442px;top:794px"></div>
<div class="ig" style="left:470px;top:794px"></div>
<div class="ig" style="left:498px;top:794px"></div>
<div class="ig" style="left:526px;top:794px"></div>
<div class="ig" style="left:554px;top:794px"></div>
<div class="ig" style="left:582px;top:794px"></div>
<div class="ig" style="left:610px;top:794px"></div>
<div class="ig" style="left:638px;top:794px"></div>
<div class="ig" style="left:666px;top:794px"></div>
<div class="ig" style="left:694px;top:794px"></div>
<div class="ln" style="left:5px;top:796px">1332</div>
<div style="left:77px;top:809px;width:1057px;height:15px;background:#e0e0e0"></div>
<div class="ig" style="left:106px;top:809px"></div>
<div class="ig" style="left:134px;top:809px"></div>
<div class="ig" style="left:162px;top:809px"></div>
<div class="ig" style="left:190px;top:809px"></div>
<div class="ig" style="left:218px;top:809px"></div>
<div class="ig" style="left:246px;top:809px"></div>
<div class="ig" style="left:274px;top:809px"></div>
<div class="ig" style="left:302px;top:809px"></div>
<div class="ig" style="left:330px;top:809px"></div>
<div class="ig" style="left:358px;top:809px"></div>
<div class="ig" style="left:386px;top:809px"></div>
<div class="ig" style="left:414px;top:809px"></div>
<div class="ig" style="left:442px;top:809px"></div>
<div class="ig" style="left:470px;top:809px"></div>
<div class="ig" style="left:498px;top:809px"></div>
<div class="ig" style="left:526px;top:809px"></div>
<div class="ig" style="left:554px;top:809px"></div>
<div class="ig" style="left:582px;top:809px"></div>
<div class="ig" style="left:610px;top:809px"></div>
<div class="ig" style="left:638px;top:809px"></div>
<div class="ig" style="left:666px;top:809px"></div>
<div class="ln" style="left:5px;top:811px">1333</div>
<div style="left:77px;top:824px;width:1057px;height:15px;background:#e0e0e0"></div>
<div class="ig" style="left:106px;top:824px"></div>
<div class="ig" style="left:134px;top:824px"></div>
<div class="ig" style="left:162px;top:824px"></div>
<div class="ig" style="left:190px;top:824px"></div>
<div class="ig" style="left:218px;top:824px"></div>
<div class="ig" style="left:246px;top:824px"></div>
<div class="ig" style="left:274px;top:824px"></div>
<div class="ig" style="left:302px;top:824px"></div>
<div class="ig" style="left:330px;top:824px"></div>
<div class="ig" style="left:358px;top:824px"></div>
<div class="ig" style="left:386px;top:824px"></div>
<div class="ig" style="left:414px;top:824px"></div>
<div class="ig" style="left:442px;top:824px"></div>
<div class="ig" style="left:470px;top:824px"></div>
<div class="ig" style="left:498px;top:824px"></div>
<div class="ig" style="left:526px;top:824px"></div>
<div class="ig" style="left:554px;top:824px"></div>
<div class="ig" style="left:582px;top:824px"></div>
<div class="ig" style="left:610px;top:824px"></div>
<div class="ln" style="left:5px;top:826px">1334</div>
<div style="left:77px;top:839px;width:1057px;height:15px;background:#e0e0e0"></div>
<div class="ig" style="left:106px;top:839px"></div>
<div class="ig" style="left:134px;top:839px"></div>
<div class="ig" style="left:162px;top:839px"></div>
<div class="ig" style="left:190px;top:839px"></div>
<div class="ig" style="left:218px;top:839px"></div>
<div class="ig" style="left:246px;top:839px"></div>
<div class="ig" style="left:274px;top:839px"></div>
<div class="ig" style="left:302px;top:839px"></div>
<div class="ig" style="left:330px;top:839px"></div>
<div class="ig" style="left:358px;top:839px"></div>
<div class="ig" style="left:386px;top:839px"></div>
<div class="ig" style="left:414px;top:839px"></div>
<div class="ig" style="left:442px;top:839px"></div>
<div class="ig" style="left:470px;top:839px"></div>
<div class="ig" style="left:498px;top:839px"></div>
<div class="ig" style="left:526px;top:839px"></div>
<div class="ig" style="left:554px;top:839px"></div>
<div class="ig" style="left:582px;top:839px"></div>
<div class="ig" style="left:610px;top:839px"></div>
<div class="ln" style="left:5px;top:841px">1335</div>
<div style="left:77px;top:854px;width:1057px;height:15px;background:#e0e0e0"></div>
<div class="ig" style="left:106px;top:854px"></div>
<div class="ig" style="left:134px;top:854px"></div>
<div class="ig" style="left:162px;top:854px"></div>
<div class="ig" style="left:190px;top:854px"></div>
<div class="ig" style="left:218px;top:854px"></div>
<div class="ig" style="left:246px;top:854px"></div>
<div class="ig" style="left:274px;top:854px"></div>
<div class="ln" style="left:5px;top:856px">1336</div>
<div style="left:77px;top:869px;width:1057px;height:15px;background:#e7e798"></div>
<div class="ln" style="left:5px;top:871px">1337</div>
<div style="left:55px;top:869px;width:3px;height:15px;background:#ff8000"></div>
<div class="mk" style="left:62px;top:871px"></div><div class="mk" style="left:62px;top:875px"></div><div class="mv" style="left:68px;top:869px"></div><div class="md" style="left:68px;top:881px"></div>
<div class="tx" style="left:77px;top:871px">node_scrape_collector_duration_seconds{collector=&quot;wifi_stations&quot;} 0.0016889572143555</div>
<div class="hl" style="left:553px;top:870px;width:112px"></div>
<div class="ln" style="left:5px;top:886px">1338</div>
<div style="left:55px;top:884px;width:3px;height:15px;background:#009900"></div>
<div class="tx" style="left:77px;top:886px">node_scrape_collector_success{collector=&quot;wifi_stations&quot;} 1</div>
<div style="left:1167px;top:29px;width:36px;height:886px;background:#e4e4e4"></div>
<div style="left:1203px;top:29px;width:25px;height:886px;background:#e0e0e0"></div>
<div style="left:1228px;top:29px;width:16px;height:886px;background:#e4e4e4"></div>
<div style="left:1244px;top:29px;width:1201px;height:886px;background:#ffffff"></div>
<div style="left:1244px;top:29px;width:1201px;height:15px;background:#e7e798"></div>
<div class="ln" style="left:1172px;top:31px">1290</div>
<div class="mk" style="left:1229px;top:31px"></div><div class="mk" style="left:1229px;top:35px"></div><div class="mv" style="left:1235px;top:29px"></div><div class="md" style="left:1235px;top:41px"></div>
<div class="tx" style="left:1244px;top:31px">node_scrape_collector_duration_seconds{collector=&quot;time&quot;} 1.2874603271484e-05</div>
<div class="hl" style="left:1643px;top:30px;width:7px"></div>
<div class="hl" style="left:1657px;top:30px;width:98px"></div>
<div class="ln" style="left:1172px;top:46px">1291</div>
<div class="tx" style="left:1244px;top:46px">node_scrape_collector_success{collector=&quot;time&quot;} 1</div>
<div class="ln" style="left:1172px;top:61px">1292</div>
<div class="tx" style="left:1244px;top:61px"># TYPE uci_dhcp_host gauge</div>
<div style="left:1244px;top:74px;width:1201px;height:15px;background:#e7e798"></div>
<div class="ln" style="left:1172px;top:76px">1293</div>
<div class="mk" style="left:1229px;top:76px"></div><div class="mk" style="left:1229px;top:80px"></div><div class="mv" style="left:1235px;top:74px"></div><div class="md" style="left:1235px;top:86px"></div>
<div class="tx" style="left:1244px;top:76px">node_scrape_collector_duration_seconds{collector=&quot;uci_dhcp_host&quot;} 0.00040197372436523</div>
<div class="hl" style="left:1720px;top:75px;width:119px"></div>
<div class="ln" style="left:1172px;top:91px">1294</div>
<div class="tx" style="left:1244px;top:91px">node_scrape_collector_success{collector=&quot;uci_dhcp_host&quot;} 1</div>
<div class="ln" style="left:1172px;top:106px">1295</div>
<div class="tx" style="left:1244px;top:106px"># TYPE node_uname_info gauge</div>
<div style="left:1244px;top:119px;width:1201px;height:15px;background:#e7e798"></div>
<div class="ln" style="left:1172px;top:121px">1296</div>
<div class="mk" style="left:1229px;top:121px"></div><div class="mk" style="left:1229px;top:125px"></div><div class="mv" style="left:1235px;top:119px"></div><div class="md" style="left:1235px;top:131px"></div>
<div class="tx" style="left:1244px;top:121px">node_uname_info{version=&quot;#0 SMP Mon Jun 23 20:40:36 2025&quot;,machine=&quot;aarch64&quot;,release=&quot;6.6.93&quot;,domainname=&quot;(none)&quot;,nodename=&quot;GL-MT3000&quot;,sysname=&quot;Linux&quot;} 1</div>
<div class="hl" style="left:1468px;top:120px;width:21px"></div>
<div class="hl" style="left:1496px;top:120px;width:21px"></div>
<div class="hl" style="left:1524px;top:120px;width:14px"></div>
<div class="hl" style="left:1545px;top:120px;width:14px"></div>
<div class="hl" style="left:1566px;top:120px;width:14px"></div>
<div class="hl" style="left:1587px;top:120px;width:14px"></div>
<div class="hl" style="left:1839px;top:120px;width:7px"></div>
<div class="hl" style="left:1853px;top:120px;width:7px"></div>
<div class="hl" style="left:1867px;top:120px;width:14px"></div>
<div class="hl" style="left:2126px;top:120px;width:42px"></div>
<div style="left:1244px;top:134px;width:1201px;height:15px;background:#e7e798"></div>
<div class="ln" style="left:1172px;top:136px">1297</div>
<div class="mk" style="left:1229px;top:136px"></div><div class="mk" style="left:1229px;top:140px"></div><div class="mv" style="left:1235px;top:134px"></div><div class="md" style="left:1235px;top:146px"></div>
<div class="tx" style="left:1244px;top:136px">node_scrape_collector_duration_seconds{collector=&quot;uname&quot;} 0.00012493133544922</div>
<div class="hl" style="left:1664px;top:135px;width:119px"></div>
<div class="ln" style="left:1172px;top:151px">1298</div>
<div class="tx" style="left:1244px;top:151px">node_scrape_collector_success{collector=&quot;uname&quot;} 1</div>
<div class="ln" style="left:1172px;top:166px">1299</div>
<div class="tx" style="left:1244px;top:166px"># TYPE wifi_network_quality gauge</div>
<div class="ln" style="left:1172px;top:181px">1300</div>
<div class="tx" style="left:1244px;top:181px"># TYPE wifi_network_bitrate gauge</div>
<div class="ln" style="left:1172px;top:196px">1301</div>
<div class="tx" style="left:1244px;top:196px"># TYPE wifi_network_noise_dbm gauge</div>
<div class="ln" style="left:1172px;top:211px">1302</div>
<div class="tx" style="left:1244px;top:211px"># TYPE wifi_network_signal_dbm gauge</div>
<div style="left:1244px;top:224px;width:1201px;height:15px;background:#d9ffd9"></div>
<div class="ln" style="left:1172px;top:226px">1303</div>
<svg class="plus" style="left:1229px;top:224px" width="14" height="14" viewBox="0 0 14 14"><path d="M4.5 0.5 H9.5 V4.5 H13.5 V9.5 H9.5 V13.5 H4.5 V9.5 H0.5 V4.5 H4.5 Z" fill="#00a300" stroke="#007a00" stroke-width="1"/><rect x="6" y="1" width="2" height="2" fill="#70c870" opacity="0.8"/><rect x="6" y="9" width="2" height="3" fill="#007000" opacity="0.7"/></svg>
<div class="tx" style="left:1244px;top:226px">wifi_network_quality{mode=&quot;Master&quot;,ifname=&quot;wlan0&quot;,ssid=&quot;GL-MT3000-359&quot;,channel=&quot;1&quot;,device=&quot;radio0&quot;,bssid=&quot;0e:b2:09:8a:95:a9&quot;,country=&quot;US&quot;,frequency=&quot;2412&quot;} 0</div>
<div style="left:1244px;top:239px;width:1201px;height:15px;background:#d9ffd9"></div>
<div class="ln" style="left:1172px;top:241px">1304</div>
<svg class="plus" style="left:1229px;top:239px" width="14" height="14" viewBox="0 0 14 14"><path d="M4.5 0.5 H9.5 V4.5 H13.5 V9.5 H9.5 V13.5 H4.5 V9.5 H0.5 V4.5 H4.5 Z" fill="#00a300" stroke="#007a00" stroke-width="1"/><rect x="6" y="1" width="2" height="2" fill="#70c870" opacity="0.8"/><rect x="6" y="9" width="2" height="3" fill="#007000" opacity="0.7"/></svg>
<div class="tx" style="left:1244px;top:241px">wifi_network_noise_dbm{mode=&quot;Master&quot;,ifname=&quot;wlan0&quot;,ssid=&quot;GL-MT3000-359&quot;,channel=&quot;1&quot;,device=&quot;radio0&quot;,bssid=&quot;0e:b2:09:8a:95:a9&quot;,country=&quot;US&quot;,frequency=&quot;2412&quot;} -90</div>
<div style="left:1244px;top:254px;width:1201px;height:15px;background:#d9ffd9"></div>
<div class="ln" style="left:1172px;top:256px">1305</div>
<svg class="plus" style="left:1229px;top:254px" width="14" height="14" viewBox="0 0 14 14"><path d="M4.5 0.5 H9.5 V4.5 H13.5 V9.5 H9.5 V13.5 H4.5 V9.5 H0.5 V4.5 H4.5 Z" fill="#00a300" stroke="#007a00" stroke-width="1"/><rect x="6" y="1" width="2" height="2" fill="#70c870" opacity="0.8"/><rect x="6" y="9" width="2" height="3" fill="#007000" opacity="0.7"/></svg>
<div class="tx" style="left:1244px;top:256px">wifi_network_bitrate{mode=&quot;Master&quot;,ifname=&quot;wlan0&quot;,ssid=&quot;GL-MT3000-359&quot;,channel=&quot;1&quot;,device=&quot;radio0&quot;,bssid=&quot;0e:b2:09:8a:95:a9&quot;,country=&quot;US&quot;,frequency=&quot;2412&quot;} 0</div>
<div style="left:1244px;top:269px;width:1201px;height:15px;background:#d9ffd9"></div>
<div class="ln" style="left:1172px;top:271px">1306</div>
<svg class="plus" style="left:1229px;top:269px" width="14" height="14" viewBox="0 0 14 14"><path d="M4.5 0.5 H9.5 V4.5 H13.5 V9.5 H9.5 V13.5 H4.5 V9.5 H0.5 V4.5 H4.5 Z" fill="#00a300" stroke="#007a00" stroke-width="1"/><rect x="6" y="1" width="2" height="2" fill="#70c870" opacity="0.8"/><rect x="6" y="9" width="2" height="3" fill="#007000" opacity="0.7"/></svg>
<div class="tx" style="left:1244px;top:271px">wifi_network_signal_dbm{mode=&quot;Master&quot;,ifname=&quot;wlan0&quot;,ssid=&quot;GL-MT3000-359&quot;,channel=&quot;1&quot;,device=&quot;radio0&quot;,bssid=&quot;0e:b2:09:8a:95:a9&quot;,country=&quot;US&quot;,frequency=&quot;2412&quot;} -255</div>
<div style="left:1244px;top:284px;width:1201px;height:15px;background:#d9ffd9"></div>
<div class="ln" style="left:1172px;top:286px">1307</div>
<svg class="plus" style="left:1229px;top:284px" width="14" height="14" viewBox="0 0 14 14"><path d="M4.5 0.5 H9.5 V4.5 H13.5 V9.5 H9.5 V13.5 H4.5 V9.5 H0.5 V4.5 H4.5 Z" fill="#00a300" stroke="#007a00" stroke-width="1"/><rect x="6" y="1" width="2" height="2" fill="#70c870" opacity="0.8"/><rect x="6" y="9" width="2" height="3" fill="#007000" opacity="0.7"/></svg>
<div class="tx" style="left:1244px;top:286px">wifi_network_quality{mode=&quot;Master&quot;,ifname=&quot;wlan1&quot;,ssid=&quot;GL-MT3000-359-5G&quot;,channel=&quot;161&quot;,device=&quot;radio1&quot;,bssid=&quot;1a:46:fc:95:11:3a&quot;,country=&quot;US&quot;,frequency=&quot;5805&quot;} 72</div>
<div style="left:1244px;top:299px;width:1201px;height:15px;background:#d9ffd9"></div>
<div class="ln" style="left:1172px;top:301px">1308</div>
<svg class="plus" style="left:1229px;top:299px" width="14" height="14" viewBox="0 0 14 14"><path d="M4.5 0.5 H9.5 V4.5 H13.5 V9.5 H9.5 V13.5 H4.5 V9.5 H0.5 V4.5 H4.5 Z" fill="#00a300" stroke="#007a00" stroke-width="1"/><rect x="6" y="1" width="2" height="2" fill="#70c870" opacity="0.8"/><rect x="6" y="9" width="2" height="3" fill="#007000" opacity="0.7"/></svg>
<div class="tx" style="left:1244px;top:301px">wifi_network_noise_dbm{mode=&quot;Master&quot;,ifname=&quot;wlan1&quot;,ssid=&quot;GL-MT3000-359-5G&quot;,channel=&quot;161&quot;,device=&quot;radio1&quot;,bssid=&quot;1a:46:fc:95:11:3a&quot;,country=&quot;US&quot;,frequency=&quot;5805&quot;} -92</div>
<div style="left:1244px;top:314px;width:1201px;height:15px;background:#d9ffd9"></div>
<div class="ln" style="left:1172px;top:316px">1309</div>
<svg class="plus" style="left:1229px;top:314px" width="14" height="14" viewBox="0 0 14 14"><path d="M4.5 0.5 H9.5 V4.5 H13.5 V9.5 H9.5 V13.5 H4.5 V9.5 H0.5 V4.5 H4.5 Z" fill="#00a300" stroke="#007a00" stroke-width="1"/><rect x="6" y="1" width="2" height="2" fill="#70c870" opacity="0.8"/><rect x="6" y="9" width="2" height="3" fill="#007000" opacity="0.7"/></svg>
<div class="tx" style="left:1244px;top:316px">wifi_network_bitrate{mode=&quot;Master&quot;,ifname=&quot;wlan1&quot;,ssid=&quot;GL-MT3000-359-5G&quot;,channel=&quot;161&quot;,device=&quot;radio1&quot;,bssid=&quot;1a:46:fc:95:11:3a&quot;,country=&quot;US&quot;,frequency=&quot;5805&quot;} 1080800</div>
<div style="left:1244px;top:329px;width:1201px;height:15px;background:#d9ffd9"></div>
<div class="ln" style="left:1172px;top:331px">1310</div>
<svg class="plus" style="left:1229px;top:329px" width="14" height="14" viewBox="0 0 14 14"><path d="M4.5 0.5 H9.5 V4.5 H13.5 V9.5 H9.5 V13.5 H4.5 V9.5 H0.5 V4.5 H4.5 Z" fill="#00a300" stroke="#007a00" stroke-width="1"/><rect x="6" y="1" width="2" height="2" fill="#70c870" opacity="0.8"/><rect x="6" y="9" width="2" height="3" fill="#007000" opacity="0.7"/></svg>
<div class="tx" style="left:1244px;top:331px">wifi_network_signal_dbm{mode=&quot;Master&quot;,ifname=&quot;wlan1&quot;,ssid=&quot;GL-MT3000-359-5G&quot;,channel=&quot;161&quot;,device=&quot;radio1&quot;,bssid=&quot;1a:46:fc:95:11:3a&quot;,country=&quot;US&quot;,frequency=&quot;5805&quot;} -59</div>
<div style="left:1244px;top:344px;width:1201px;height:15px;background:#e7e798"></div>
<div class="ln" style="left:1172px;top:346px">1311</div>
<div class="mk" style="left:1229px;top:346px"></div><div class="mk" style="left:1229px;top:350px"></div><div class="mv" style="left:1235px;top:344px"></div><div class="md" style="left:1235px;top:356px"></div>
<div class="tx" style="left:1244px;top:346px">node_scrape_collector_duration_seconds{collector=&quot;wifi&quot;} 0.017385959625244</div>
<div class="hl" style="left:1657px;top:345px;width:105px"></div>
<div class="ln" style="left:1172px;top:361px">1312</div>
<div class="tx" style="left:1244px;top:361px">node_scrape_collector_success{collector=&quot;wifi&quot;} 1</div>
<div class="ln" style="left:1172px;top:376px">1313</div>
<div class="tx" style="left:1244px;top:376px"># TYPE wifi_stations gauge</div>
<div class="ln" style="left:1172px;top:391px">1314</div>
<div class="tx" style="left:1244px;top:391px"># TYPE wifi_station_signal_dbm gauge</div>
<div class="ln" style="left:1172px;top:406px">1315</div>
<div class="tx" style="left:1244px;top:406px"># TYPE wifi_station_inactive_milliseconds gauge</div>
<div class="ln" style="left:1172px;top:421px">1316</div>
<div class="tx" style="left:1244px;top:421px"># TYPE wifi_station_expected_throughput_kilobits_per_second gauge</div>
<div class="ln" style="left:1172px;top:436px">1317</div>
<div class="tx" style="left:1244px;top:436px"># TYPE wifi_station_transmit_kilobits_per_second gauge</div>
<div class="ln" style="left:1172px;top:451px">1318</div>
<div class="tx" style="left:1244px;top:451px"># TYPE wifi_station_receive_kilobits_per_second gauge</div>
<div class="ln" style="left:1172px;top:466px">1319</div>
<div class="tx" style="left:1244px;top:466px"># TYPE wifi_station_transmit_packets_total counter</div>
<div class="ln" style="left:1172px;top:481px">1320</div>
<div class="tx" style="left:1244px;top:481px"># TYPE wifi_station_receive_packets_total counter</div>
<div class="ln" style="left:1172px;top:496px">1321</div>
<div class="tx" style="left:1244px;top:496px"># TYPE wifi_station_transmit_bytes_total counter</div>
<div class="ln" style="left:1172px;top:511px">1322</div>
<div class="tx" style="left:1244px;top:511px"># TYPE wifi_station_receive_bytes_total counter</div>
<div style="left:1244px;top:524px;width:1201px;height:15px;background:#d9ffd9"></div>
<div class="ln" style="left:1172px;top:526px">1323</div>
<svg class="plus" style="left:1229px;top:524px" width="14" height="14" viewBox="0 0 14 14"><path d="M4.5 0.5 H9.5 V4.5 H13.5 V9.5 H9.5 V13.5 H4.5 V9.5 H0.5 V4.5 H4.5 Z" fill="#00a300" stroke="#007a00" stroke-width="1"/><rect x="6" y="1" width="2" height="2" fill="#70c870" opacity="0.8"/><rect x="6" y="9" width="2" height="3" fill="#007000" opacity="0.7"/></svg>
<div class="tx" style="left:1244px;top:526px">wifi_stations{ifname=&quot;wlan0&quot;} 0</div>
<div style="left:1244px;top:539px;width:1201px;height:15px;background:#d9ffd9"></div>
<div class="ln" style="left:1172px;top:541px">1324</div>
<svg class="plus" style="left:1229px;top:539px" width="14" height="14" viewBox="0 0 14 14"><path d="M4.5 0.5 H9.5 V4.5 H13.5 V9.5 H9.5 V13.5 H4.5 V9.5 H0.5 V4.5 H4.5 Z" fill="#00a300" stroke="#007a00" stroke-width="1"/><rect x="6" y="1" width="2" height="2" fill="#70c870" opacity="0.8"/><rect x="6" y="9" width="2" height="3" fill="#007000" opacity="0.7"/></svg>
<div class="tx" style="left:1244px;top:541px">wifi_station_signal_dbm{mac=&quot;EC:75:0C:34:AE:EC&quot;,ifname=&quot;wlan1&quot;} -67</div>
<div style="left:1244px;top:554px;width:1201px;height:15px;background:#d9ffd9"></div>
<div class="ln" style="left:1172px;top:556px">1325</div>
<svg class="plus" style="left:1229px;top:554px" width="14" height="14" viewBox="0 0 14 14"><path d="M4.5 0.5 H9.5 V4.5 H13.5 V9.5 H9.5 V13.5 H4.5 V9.5 H0.5 V4.5 H4.5 Z" fill="#00a300" stroke="#007a00" stroke-width="1"/><rect x="6" y="1" width="2" height="2" fill="#70c870" opacity="0.8"/><rect x="6" y="9" width="2" height="3" fill="#007000" opacity="0.7"/></svg>
<div class="tx" style="left:1244px;top:556px">wifi_station_inactive_milliseconds{mac=&quot;EC:75:0C:34:AE:EC&quot;,ifname=&quot;wlan1&quot;} 0</div>
<div style="left:1244px;top:569px;width:1201px;height:15px;background:#d9ffd9"></div>
<div class="ln" style="left:1172px;top:571px">1326</div>
<svg class="plus" style="left:1229px;top:569px" width="14" height="14" viewBox="0 0 14 14"><path d="M4.5 0.5 H9.5 V4.5 H13.5 V9.5 H9.5 V13.5 H4.5 V9.5 H0.5 V4.5 H4.5 Z" fill="#00a300" stroke="#007a00" stroke-width="1"/><rect x="6" y="1" width="2" height="2" fill="#70c870" opacity="0.8"/><rect x="6" y="9" width="2" height="3" fill="#007000" opacity="0.7"/></svg>
<div class="tx" style="left:1244px;top:571px">wifi_station_transmit_kilobits_per_second{mac=&quot;EC:75:0C:34:AE:EC&quot;,ifname=&quot;wlan1&quot;} 960700</div>
<div style="left:1244px;top:584px;width:1201px;height:15px;background:#d9ffd9"></div>
<div class="ln" style="left:1172px;top:586px">1327</div>
<svg class="plus" style="left:1229px;top:584px" width="14" height="14" viewBox="0 0 14 14"><path d="M4.5 0.5 H9.5 V4.5 H13.5 V9.5 H9.5 V13.5 H4.5 V9.5 H0.5 V4.5 H4.5 Z" fill="#00a300" stroke="#007a00" stroke-width="1"/><rect x="6" y="1" width="2" height="2" fill="#70c870" opacity="0.8"/><rect x="6" y="9" width="2" height="3" fill="#007000" opacity="0.7"/></svg>
<div class="tx" style="left:1244px;top:586px">wifi_station_receive_kilobits_per_second{mac=&quot;EC:75:0C:34:AE:EC&quot;,ifname=&quot;wlan1&quot;} 720600</div>
<div style="left:1244px;top:599px;width:1201px;height:15px;background:#d9ffd9"></div>
<div class="ln" style="left:1172px;top:601px">1328</div>
<svg class="plus" style="left:1229px;top:599px" width="14" height="14" viewBox="0 0 14 14"><path d="M4.5 0.5 H9.5 V4.5 H13.5 V9.5 H9.5 V13.5 H4.5 V9.5 H0.5 V4.5 H4.5 Z" fill="#00a300" stroke="#007a00" stroke-width="1"/><rect x="6" y="1" width="2" height="2" fill="#70c870" opacity="0.8"/><rect x="6" y="9" width="2" height="3" fill="#007000" opacity="0.7"/></svg>
<div class="tx" style="left:1244px;top:601px">wifi_station_transmit_packets_total{mac=&quot;EC:75:0C:34:AE:EC&quot;,ifname=&quot;wlan1&quot;} 114872</div>
<div style="left:1244px;top:614px;width:1201px;height:15px;background:#d9ffd9"></div>
<div class="ln" style="left:1172px;top:616px">1329</div>
<svg class="plus" style="left:1229px;top:614px" width="14" height="14" viewBox="0 0 14 14"><path d="M4.5 0.5 H9.5 V4.5 H13.5 V9.5 H9.5 V13.5 H4.5 V9.5 H0.5 V4.5 H4.5 Z" fill="#00a300" stroke="#007a00" stroke-width="1"/><rect x="6" y="1" width="2" height="2" fill="#70c870" opacity="0.8"/><rect x="6" y="9" width="2" height="3" fill="#007000" opacity="0.7"/></svg>
<div class="tx" style="left:1244px;top:616px">wifi_station_receive_packets_total{mac=&quot;EC:75:0C:34:AE:EC&quot;,ifname=&quot;wlan1&quot;} 58193</div>
<div style="left:1244px;top:629px;width:1201px;height:15px;background:#d9ffd9"></div>
<div class="ln" style="left:1172px;top:631px">1330</div>
<svg class="plus" style="left:1229px;top:629px" width="14" height="14" viewBox="0 0 14 14"><path d="M4.5 0.5 H9.5 V4.5 H13.5 V9.5 H9.5 V13.5 H4.5 V9.5 H0.5 V4.5 H4.5 Z" fill="#00a300" stroke="#007a00" stroke-width="1"/><rect x="6" y="1" width="2" height="2" fill="#70c870" opacity="0.8"/><rect x="6" y="9" width="2" height="3" fill="#007000" opacity="0.7"/></svg>
<div class="tx" style="left:1244px;top:631px">wifi_station_signal_dbm{mac=&quot;F4:C8:8A:64:36:33&quot;,ifname=&quot;wlan1&quot;} -51</div>
<div style="left:1244px;top:644px;width:1201px;height:15px;background:#d9ffd9"></div>
<div class="ln" style="left:1172px;top:646px">1331</div>
<svg class="plus" style="left:1229px;top:644px" width="14" height="14" viewBox="0 0 14 14"><path d="M4.5 0.5 H9.5 V4.5 H13.5 V9.5 H9.5 V13.5 H4.5 V9.5 H0.5 V4.5 H4.5 Z" fill="#00a300" stroke="#007a00" stroke-width="1"/><rect x="6" y="1" width="2" height="2" fill="#70c870" opacity="0.8"/><rect x="6" y="9" width="2" height="3" fill="#007000" opacity="0.7"/></svg>
<div class="tx" style="left:1244px;top:646px">wifi_station_inactive_milliseconds{mac=&quot;F4:C8:8A:64:36:33&quot;,ifname=&quot;wlan1&quot;} 540</div>
<div style="left:1244px;top:659px;width:1201px;height:15px;background:#d9ffd9"></div>
<div class="ln" style="left:1172px;top:661px">1332</div>
<svg class="plus" style="left:1229px;top:659px" width="14" height="14" viewBox="0 0 14 14"><path d="M4.5 0.5 H9.5 V4.5 H13.5 V9.5 H9.5 V13.5 H4.5 V9.5 H0.5 V4.5 H4.5 Z" fill="#00a300" stroke="#007a00" stroke-width="1"/><rect x="6" y="1" width="2" height="2" fill="#70c870" opacity="0.8"/><rect x="6" y="9" width="2" height="3" fill="#007000" opacity="0.7"/></svg>
<div class="tx" style="left:1244px;top:661px">wifi_station_transmit_kilobits_per_second{mac=&quot;F4:C8:8A:64:36:33&quot;,ifname=&quot;wlan1&quot;} 1200900</div>
<div style="left:1244px;top:674px;width:1201px;height:15px;background:#d9ffd9"></div>
<div class="ln" style="left:1172px;top:676px">1333</div>
<svg class="plus" style="left:1229px;top:674px" width="14" height="14" viewBox="0 0 14 14"><path d="M4.5 0.5 H9.5 V4.5 H13.5 V9.5 H9.5 V13.5 H4.5 V9.5 H0.5 V4.5 H4.5 Z" fill="#00a300" stroke="#007a00" stroke-width="1"/><rect x="6" y="1" width="2" height="2" fill="#70c870" opacity="0.8"/><rect x="6" y="9" width="2" height="3" fill="#007000" opacity="0.7"/></svg>
<div class="tx" style="left:1244px;top:676px">wifi_station_receive_kilobits_per_second{mac=&quot;F4:C8:8A:64:36:33&quot;,ifname=&quot;wlan1&quot;} 735100</div>
<div style="left:1244px;top:689px;width:1201px;height:15px;background:#d9ffd9"></div>
<div class="ln" style="left:1172px;top:691px">1334</div>
<svg class="plus" style="left:1229px;top:689px" width="14" height="14" viewBox="0 0 14 14"><path d="M4.5 0.5 H9.5 V4.5 H13.5 V9.5 H9.5 V13.5 H4.5 V9.5 H0.5 V4.5 H4.5 Z" fill="#00a300" stroke="#007a00" stroke-width="1"/><rect x="6" y="1" width="2" height="2" fill="#70c870" opacity="0.8"/><rect x="6" y="9" width="2" height="3" fill="#007000" opacity="0.7"/></svg>
<div class="tx" style="left:1244px;top:691px">wifi_station_transmit_packets_total{mac=&quot;F4:C8:8A:64:36:33&quot;,ifname=&quot;wlan1&quot;} 425</div>
<div style="left:1244px;top:704px;width:1201px;height:15px;background:#d9ffd9"></div>
<div class="ln" style="left:1172px;top:706px">1335</div>
<svg class="plus" style="left:1229px;top:704px" width="14" height="14" viewBox="0 0 14 14"><path d="M4.5 0.5 H9.5 V4.5 H13.5 V9.5 H9.5 V13.5 H4.5 V9.5 H0.5 V4.5 H4.5 Z" fill="#00a300" stroke="#007a00" stroke-width="1"/><rect x="6" y="1" width="2" height="2" fill="#70c870" opacity="0.8"/><rect x="6" y="9" width="2" height="3" fill="#007000" opacity="0.7"/></svg>
<div class="tx" style="left:1244px;top:706px">wifi_station_receive_packets_total{mac=&quot;F4:C8:8A:64:36:33&quot;,ifname=&quot;wlan1&quot;} 736</div>
<div style="left:1244px;top:719px;width:1201px;height:15px;background:#d9ffd9"></div>
<div class="ln" style="left:1172px;top:721px">1336</div>
<svg class="plus" style="left:1229px;top:719px" width="14" height="14" viewBox="0 0 14 14"><path d="M4.5 0.5 H9.5 V4.5 H13.5 V9.5 H9.5 V13.5 H4.5 V9.5 H0.5 V4.5 H4.5 Z" fill="#00a300" stroke="#007a00" stroke-width="1"/><rect x="6" y="1" width="2" height="2" fill="#70c870" opacity="0.8"/><rect x="6" y="9" width="2" height="3" fill="#007000" opacity="0.7"/></svg>
<div class="tx" style="left:1244px;top:721px">wifi_stations{ifname=&quot;wlan1&quot;} 2</div>
<div style="left:1244px;top:734px;width:1201px;height:15px;background:#e7e798"></div>
<div class="ln" style="left:1172px;top:736px">1337</div>
<div class="mk" style="left:1229px;top:736px"></div><div class="mk" style="left:1229px;top:740px"></div><div class="mv" style="left:1235px;top:734px"></div><div class="md" style="left:1235px;top:746px"></div>
<div class="tx" style="left:1244px;top:736px">node_scrape_collector_duration_seconds{collector=&quot;wifi_stations&quot;} 0.0050580501556396</div>
<div class="hl" style="left:1720px;top:735px;width:112px"></div>
<div class="ln" style="left:1172px;top:751px">1338</div>
<div class="tx" style="left:1244px;top:751px">node_scrape_collector_success{collector=&quot;wifi_stations&quot;} 1</div>
<div style="left:1134px;top:29px;width:1px;height:886px;background:#ffffff"></div>
<div style="left:1135px;top:29px;width:17px;height:886px;background:#f0f0f0"></div>
<div style="left:1142px;top:849px;width:2px;height:37px;background:#858585;border-radius:1px"></div>
<div style="left:1152px;top:25px;width:1px;height:890px;background:#f8f8f8"></div>
<div style="left:1153px;top:25px;width:2px;height:890px;background:#6a6a6a"></div>
<div style="left:1163px;top:1px;width:1px;height:914px;background:#fafafa"></div>
<div class="dot" style="left:1156px;top:16px"></div><div class="dot" style="left:1160px;top:16px"></div>
<div class="dot" style="left:1156px;top:20px"></div><div class="dot" style="left:1160px;top:20px"></div>
<div class="dot" style="left:1156px;top:24px"></div><div class="dot" style="left:1160px;top:24px"></div>
<div class="dot" style="left:1156px;top:28px"></div><div class="dot" style="left:1160px;top:28px"></div>
<div class="dot" style="left:1156px;top:32px"></div><div class="dot" style="left:1160px;top:32px"></div>
<div class="dot" style="left:1156px;top:36px"></div><div class="dot" style="left:1160px;top:36px"></div>
<div class="dot" style="left:1156px;top:40px"></div><div class="dot" style="left:1160px;top:40px"></div>
<div class="dot" style="left:1156px;top:44px"></div><div class="dot" style="left:1160px;top:44px"></div>
<div class="dot" style="left:1156px;top:48px"></div><div class="dot" style="left:1160px;top:48px"></div>
<div class="dot" style="left:1156px;top:52px"></div><div class="dot" style="left:1160px;top:52px"></div>
<div class="dot" style="left:1156px;top:56px"></div><div class="dot" style="left:1160px;top:56px"></div>
<div class="dot" style="left:1156px;top:60px"></div><div class="dot" style="left:1160px;top:60px"></div>
<div class="dot" style="left:1156px;top:64px"></div><div class="dot" style="left:1160px;top:64px"></div>
<div class="dot" style="left:1156px;top:68px"></div><div class="dot" style="left:1160px;top:68px"></div>
<div class="dot" style="left:1156px;top:72px"></div><div class="dot" style="left:1160px;top:72px"></div>
<div class="dot" style="left:1156px;top:76px"></div><div class="dot" style="left:1160px;top:76px"></div>
<div class="dot" style="left:1156px;top:80px"></div><div class="dot" style="left:1160px;top:80px"></div>
<div class="dot" style="left:1156px;top:84px"></div><div class="dot" style="left:1160px;top:84px"></div>
<div class="dot" style="left:1156px;top:88px"></div><div class="dot" style="left:1160px;top:88px"></div>
<div class="dot" style="left:1156px;top:92px"></div><div class="dot" style="left:1160px;top:92px"></div>
<div class="dot" style="left:1156px;top:96px"></div><div class="dot" style="left:1160px;top:96px"></div>
<div class="dot" style="left:1156px;top:100px"></div><div class="dot" style="left:1160px;top:100px"></div>
<div class="dot" style="left:1156px;top:104px"></div><div class="dot" style="left:1160px;top:104px"></div>
<div class="dot" style="left:1156px;top:108px"></div><div class="dot" style="left:1160px;top:108px"></div>
<div class="dot" style="left:1156px;top:112px"></div><div class="dot" style="left:1160px;top:112px"></div>
<div class="dot" style="left:1156px;top:116px"></div><div class="dot" style="left:1160px;top:116px"></div>
<div class="dot" style="left:1156px;top:120px"></div><div class="dot" style="left:1160px;top:120px"></div>
<div class="dot" style="left:1156px;top:124px"></div><div class="dot" style="left:1160px;top:124px"></div>
<div class="dot" style="left:1156px;top:128px"></div><div class="dot" style="left:1160px;top:128px"></div>
<div class="dot" style="left:1156px;top:132px"></div><div class="dot" style="left:1160px;top:132px"></div>
<div class="dot" style="left:1156px;top:136px"></div><div class="dot" style="left:1160px;top:136px"></div>
<div class="dot" style="left:1156px;top:140px"></div><div class="dot" style="left:1160px;top:140px"></div>
<div class="dot" style="left:1156px;top:144px"></div><div class="dot" style="left:1160px;top:144px"></div>
<div class="dot" style="left:1156px;top:148px"></div><div class="dot" style="left:1160px;top:148px"></div>
<div class="dot" style="left:1156px;top:152px"></div><div class="dot" style="left:1160px;top:152px"></div>
<div class="dot" style="left:1156px;top:156px"></div><div class="dot" style="left:1160px;top:156px"></div>
<div class="dot" style="left:1156px;top:160px"></div><div class="dot" style="left:1160px;top:160px"></div>
<div class="dot" style="left:1156px;top:164px"></div><div class="dot" style="left:1160px;top:164px"></div>
<div class="dot" style="left:1156px;top:168px"></div><div class="dot" style="left:1160px;top:168px"></div>
<div class="dot" style="left:1156px;top:172px"></div><div class="dot" style="left:1160px;top:172px"></div>
<div class="dot" style="left:1156px;top:176px"></div><div class="dot" style="left:1160px;top:176px"></div>
<div class="dot" style="left:1156px;top:180px"></div><div class="dot" style="left:1160px;top:180px"></div>
<div class="dot" style="left:1156px;top:184px"></div><div class="dot" style="left:1160px;top:184px"></div>
<div class="dot" style="left:1156px;top:188px"></div><div class="dot" style="left:1160px;top:188px"></div>
<div class="dot" style="left:1156px;top:192px"></div><div class="dot" style="left:1160px;top:192px"></div>
<div class="dot" style="left:1156px;top:196px"></div><div class="dot" style="left:1160px;top:196px"></div>
<div class="dot" style="left:1156px;top:200px"></div><div class="dot" style="left:1160px;top:200px"></div>
<div class="dot" style="left:1156px;top:204px"></div><div class="dot" style="left:1160px;top:204px"></div>
<div class="dot" style="left:1156px;top:208px"></div><div class="dot" style="left:1160px;top:208px"></div>
<div class="dot" style="left:1156px;top:212px"></div><div class="dot" style="left:1160px;top:212px"></div>
<div class="dot" style="left:1156px;top:216px"></div><div class="dot" style="left:1160px;top:216px"></div>
<div class="dot" style="left:1156px;top:220px"></div><div class="dot" style="left:1160px;top:220px"></div>
<div class="dot" style="left:1156px;top:224px"></div><div class="dot" style="left:1160px;top:224px"></div>
<div class="dot" style="left:1156px;top:228px"></div><div class="dot" style="left:1160px;top:228px"></div>
<div class="dot" style="left:1156px;top:232px"></div><div class="dot" style="left:1160px;top:232px"></div>
<div class="dot" style="left:1156px;top:236px"></div><div class="dot" style="left:1160px;top:236px"></div>
<div class="dot" style="left:1156px;top:240px"></div><div class="dot" style="left:1160px;top:240px"></div>
<div class="dot" style="left:1156px;top:244px"></div><div class="dot" style="left:1160px;top:244px"></div>
<div class="dot" style="left:1156px;top:248px"></div><div class="dot" style="left:1160px;top:248px"></div>
<div class="dot" style="left:1156px;top:252px"></div><div class="dot" style="left:1160px;top:252px"></div>
<div class="dot" style="left:1156px;top:256px"></div><div class="dot" style="left:1160px;top:256px"></div>
<div class="dot" style="left:1156px;top:260px"></div><div class="dot" style="left:1160px;top:260px"></div>
<div class="dot" style="left:1156px;top:264px"></div><div class="dot" style="left:1160px;top:264px"></div>
<div class="dot" style="left:1156px;top:268px"></div><div class="dot" style="left:1160px;top:268px"></div>
<div class="dot" style="left:1156px;top:272px"></div><div class="dot" style="left:1160px;top:272px"></div>
<div class="dot" style="left:1156px;top:276px"></div><div class="dot" style="left:1160px;top:276px"></div>
<div class="dot" style="left:1156px;top:280px"></div><div class="dot" style="left:1160px;top:280px"></div>
<div class="dot" style="left:1156px;top:284px"></div><div class="dot" style="left:1160px;top:284px"></div>
<div class="dot" style="left:1156px;top:288px"></div><div class="dot" style="left:1160px;top:288px"></div>
<div class="dot" style="left:1156px;top:292px"></div><div class="dot" style="left:1160px;top:292px"></div>
<div class="dot" style="left:1156px;top:296px"></div><div class="dot" style="left:1160px;top:296px"></div>
<div class="dot" style="left:1156px;top:300px"></div><div class="dot" style="left:1160px;top:300px"></div>
<div class="dot" style="left:1156px;top:304px"></div><div class="dot" style="left:1160px;top:304px"></div>
<div class="dot" style="left:1156px;top:308px"></div><div class="dot" style="left:1160px;top:308px"></div>
<div class="dot" style="left:1156px;top:312px"></div><div class="dot" style="left:1160px;top:312px"></div>
<div class="dot" style="left:1156px;top:316px"></div><div class="dot" style="left:1160px;top:316px"></div>
<div class="dot" style="left:1156px;top:320px"></div><div class="dot" style="left:1160px;top:320px"></div>
<div class="dot" style="left:1156px;top:324px"></div><div class="dot" style="left:1160px;top:324px"></div>
<div class="dot" style="left:1156px;top:328px"></div><div class="dot" style="left:1160px;top:328px"></div>
<div class="dot" style="left:1156px;top:332px"></div><div class="dot" style="left:1160px;top:332px"></div>
<div class="dot" style="left:1156px;top:336px"></div><div class="dot" style="left:1160px;top:336px"></div>
<div class="dot" style="left:1156px;top:340px"></div><div class="dot" style="left:1160px;top:340px"></div>
<div class="dot" style="left:1156px;top:344px"></div><div class="dot" style="left:1160px;top:344px"></div>
<div class="dot" style="left:1156px;top:348px"></div><div class="dot" style="left:1160px;top:348px"></div>
<div class="dot" style="left:1156px;top:352px"></div><div class="dot" style="left:1160px;top:352px"></div>
<div class="dot" style="left:1156px;top:356px"></div><div class="dot" style="left:1160px;top:356px"></div>
<div class="dot" style="left:1156px;top:360px"></div><div class="dot" style="left:1160px;top:360px"></div>
<div class="dot" style="left:1156px;top:364px"></div><div class="dot" style="left:1160px;top:364px"></div>
<div class="dot" style="left:1156px;top:368px"></div><div class="dot" style="left:1160px;top:368px"></div>
<div class="dot" style="left:1156px;top:372px"></div><div class="dot" style="left:1160px;top:372px"></div>
<div class="dot" style="left:1156px;top:376px"></div><div class="dot" style="left:1160px;top:376px"></div>
<div class="dot" style="left:1156px;top:380px"></div><div class="dot" style="left:1160px;top:380px"></div>
<div class="dot" style="left:1156px;top:384px"></div><div class="dot" style="left:1160px;top:384px"></div>
<div class="dot" style="left:1156px;top:388px"></div><div class="dot" style="left:1160px;top:388px"></div>
<div class="dot" style="left:1156px;top:392px"></div><div class="dot" style="left:1160px;top:392px"></div>
<div class="dot" style="left:1156px;top:396px"></div><div class="dot" style="left:1160px;top:396px"></div>
<div class="dot" style="left:1156px;top:400px"></div><div class="dot" style="left:1160px;top:400px"></div>
<div class="dot" style="left:1156px;top:404px"></div><div class="dot" style="left:1160px;top:404px"></div>
<div class="dot" style="left:1156px;top:408px"></div><div class="dot" style="left:1160px;top:408px"></div>
<div class="dot" style="left:1156px;top:412px"></div><div class="dot" style="left:1160px;top:412px"></div>
<div class="dot" style="left:1156px;top:416px"></div><div class="dot" style="left:1160px;top:416px"></div>
<div class="dot" style="left:1156px;top:420px"></div><div class="dot" style="left:1160px;top:420px"></div>
<div class="dot" style="left:1156px;top:424px"></div><div class="dot" style="left:1160px;top:424px"></div>
<div class="dot" style="left:1156px;top:428px"></div><div class="dot" style="left:1160px;top:428px"></div>
<div class="dot" style="left:1156px;top:432px"></div><div class="dot" style="left:1160px;top:432px"></div>
<div class="dot" style="left:1156px;top:436px"></div><div class="dot" style="left:1160px;top:436px"></div>
<div class="dot" style="left:1156px;top:440px"></div><div class="dot" style="left:1160px;top:440px"></div>
<div class="dot" style="left:1156px;top:444px"></div><div class="dot" style="left:1160px;top:444px"></div>
<div class="dot" style="left:1156px;top:448px"></div><div class="dot" style="left:1160px;top:448px"></div>
<div class="dot" style="left:1156px;top:452px"></div><div class="dot" style="left:1160px;top:452px"></div>
<div class="dot" style="left:1156px;top:456px"></div><div class="dot" style="left:1160px;top:456px"></div>
<div class="dot" style="left:1156px;top:460px"></div><div class="dot" style="left:1160px;top:460px"></div>
<div class="dot" style="left:1156px;top:464px"></div><div class="dot" style="left:1160px;top:464px"></div>
<div class="dot" style="left:1156px;top:468px"></div><div class="dot" style="left:1160px;top:468px"></div>
<div class="dot" style="left:1156px;top:472px"></div><div class="dot" style="left:1160px;top:472px"></div>
<div class="dot" style="left:1156px;top:476px"></div><div class="dot" style="left:1160px;top:476px"></div>
<div class="dot" style="left:1156px;top:480px"></div><div class="dot" style="left:1160px;top:480px"></div>
<div class="dot" style="left:1156px;top:484px"></div><div class="dot" style="left:1160px;top:484px"></div>
<div class="dot" style="left:1156px;top:488px"></div><div class="dot" style="left:1160px;top:488px"></div>
<div class="dot" style="left:1156px;top:492px"></div><div class="dot" style="left:1160px;top:492px"></div>
<div class="dot" style="left:1156px;top:496px"></div><div class="dot" style="left:1160px;top:496px"></div>
<div class="dot" style="left:1156px;top:500px"></div><div class="dot" style="left:1160px;top:500px"></div>
<div class="dot" style="left:1156px;top:504px"></div><div class="dot" style="left:1160px;top:504px"></div>
<div class="dot" style="left:1156px;top:508px"></div><div class="dot" style="left:1160px;top:508px"></div>
<div class="dot" style="left:1156px;top:512px"></div><div class="dot" style="left:1160px;top:512px"></div>
<div class="dot" style="left:1156px;top:516px"></div><div class="dot" style="left:1160px;top:516px"></div>
<div class="dot" style="left:1156px;top:520px"></div><div class="dot" style="left:1160px;top:520px"></div>
<div class="dot" style="left:1156px;top:524px"></div><div class="dot" style="left:1160px;top:524px"></div>
<div class="dot" style="left:1156px;top:528px"></div><div class="dot" style="left:1160px;top:528px"></div>
<div class="dot" style="left:1156px;top:532px"></div><div class="dot" style="left:1160px;top:532px"></div>
<div class="dot" style="left:1156px;top:536px"></div><div class="dot" style="left:1160px;top:536px"></div>
<div class="dot" style="left:1156px;top:540px"></div><div class="dot" style="left:1160px;top:540px"></div>
<div class="dot" style="left:1156px;top:544px"></div><div class="dot" style="left:1160px;top:544px"></div>
<div class="dot" style="left:1156px;top:548px"></div><div class="dot" style="left:1160px;top:548px"></div>
<div class="dot" style="left:1156px;top:552px"></div><div class="dot" style="left:1160px;top:552px"></div>
<div class="dot" style="left:1156px;top:556px"></div><div class="dot" style="left:1160px;top:556px"></div>
<div class="dot" style="left:1156px;top:560px"></div><div class="dot" style="left:1160px;top:560px"></div>
<div class="dot" style="left:1156px;top:564px"></div><div class="dot" style="left:1160px;top:564px"></div>
<div class="dot" style="left:1156px;top:568px"></div><div class="dot" style="left:1160px;top:568px"></div>
<div class="dot" style="left:1156px;top:572px"></div><div class="dot" style="left:1160px;top:572px"></div>
<div class="dot" style="left:1156px;top:576px"></div><div class="dot" style="left:1160px;top:576px"></div>
<div class="dot" style="left:1156px;top:580px"></div><div class="dot" style="left:1160px;top:580px"></div>
<div class="dot" style="left:1156px;top:584px"></div><div class="dot" style="left:1160px;top:584px"></div>
<div class="dot" style="left:1156px;top:588px"></div><div class="dot" style="left:1160px;top:588px"></div>
<div class="dot" style="left:1156px;top:592px"></div><div class="dot" style="left:1160px;top:592px"></div>
<div class="dot" style="left:1156px;top:596px"></div><div class="dot" style="left:1160px;top:596px"></div>
<div class="dot" style="left:1156px;top:600px"></div><div class="dot" style="left:1160px;top:600px"></div>
<div class="dot" style="left:1156px;top:604px"></div><div class="dot" style="left:1160px;top:604px"></div>
<div class="dot" style="left:1156px;top:608px"></div><div class="dot" style="left:1160px;top:608px"></div>
<div class="dot" style="left:1156px;top:612px"></div><div class="dot" style="left:1160px;top:612px"></div>
<div class="dot" style="left:1156px;top:616px"></div><div class="dot" style="left:1160px;top:616px"></div>
<div class="dot" style="left:1156px;top:620px"></div><div class="dot" style="left:1160px;top:620px"></div>
<div class="dot" style="left:1156px;top:624px"></div><div class="dot" style="left:1160px;top:624px"></div>
<div class="dot" style="left:1156px;top:628px"></div><div class="dot" style="left:1160px;top:628px"></div>
<div class="dot" style="left:1156px;top:632px"></div><div class="dot" style="left:1160px;top:632px"></div>
<div class="dot" style="left:1156px;top:636px"></div><div class="dot" style="left:1160px;top:636px"></div>
<div class="dot" style="left:1156px;top:640px"></div><div class="dot" style="left:1160px;top:640px"></div>
<div class="dot" style="left:1156px;top:644px"></div><div class="dot" style="left:1160px;top:644px"></div>
<div class="dot" style="left:1156px;top:648px"></div><div class="dot" style="left:1160px;top:648px"></div>
<div class="dot" style="left:1156px;top:652px"></div><div class="dot" style="left:1160px;top:652px"></div>
<div class="dot" style="left:1156px;top:656px"></div><div class="dot" style="left:1160px;top:656px"></div>
<div class="dot" style="left:1156px;top:660px"></div><div class="dot" style="left:1160px;top:660px"></div>
<div class="dot" style="left:1156px;top:664px"></div><div class="dot" style="left:1160px;top:664px"></div>
<div class="dot" style="left:1156px;top:668px"></div><div class="dot" style="left:1160px;top:668px"></div>
<div class="dot" style="left:1156px;top:672px"></div><div class="dot" style="left:1160px;top:672px"></div>
<div class="dot" style="left:1156px;top:676px"></div><div class="dot" style="left:1160px;top:676px"></div>
<div class="dot" style="left:1156px;top:680px"></div><div class="dot" style="left:1160px;top:680px"></div>
<div class="dot" style="left:1156px;top:684px"></div><div class="dot" style="left:1160px;top:684px"></div>
<div class="dot" style="left:1156px;top:688px"></div><div class="dot" style="left:1160px;top:688px"></div>
<div class="dot" style="left:1156px;top:692px"></div><div class="dot" style="left:1160px;top:692px"></div>
<div class="dot" style="left:1156px;top:696px"></div><div class="dot" style="left:1160px;top:696px"></div>
<div class="dot" style="left:1156px;top:700px"></div><div class="dot" style="left:1160px;top:700px"></div>
<div class="dot" style="left:1156px;top:704px"></div><div class="dot" style="left:1160px;top:704px"></div>
<div class="dot" style="left:1156px;top:708px"></div><div class="dot" style="left:1160px;top:708px"></div>
<div class="dot" style="left:1156px;top:712px"></div><div class="dot" style="left:1160px;top:712px"></div>
<div class="dot" style="left:1156px;top:716px"></div><div class="dot" style="left:1160px;top:716px"></div>
<div class="dot" style="left:1156px;top:720px"></div><div class="dot" style="left:1160px;top:720px"></div>
<div class="dot" style="left:1156px;top:724px"></div><div class="dot" style="left:1160px;top:724px"></div>
<div class="dot" style="left:1156px;top:728px"></div><div class="dot" style="left:1160px;top:728px"></div>
<div class="dot" style="left:1156px;top:732px"></div><div class="dot" style="left:1160px;top:732px"></div>
<div class="dot" style="left:1156px;top:736px"></div><div class="dot" style="left:1160px;top:736px"></div>
<div class="dot" style="left:1156px;top:740px"></div><div class="dot" style="left:1160px;top:740px"></div>
<div class="dot" style="left:1156px;top:744px"></div><div class="dot" style="left:1160px;top:744px"></div>
<div class="dot" style="left:1156px;top:748px"></div><div class="dot" style="left:1160px;top:748px"></div>
<div class="dot" style="left:1156px;top:752px"></div><div class="dot" style="left:1160px;top:752px"></div>
<div class="dot" style="left:1156px;top:756px"></div><div class="dot" style="left:1160px;top:756px"></div>
<div class="dot" style="left:1156px;top:760px"></div><div class="dot" style="left:1160px;top:760px"></div>
<div class="dot" style="left:1156px;top:764px"></div><div class="dot" style="left:1160px;top:764px"></div>
<div class="dot" style="left:1156px;top:768px"></div><div class="dot" style="left:1160px;top:768px"></div>
<div class="dot" style="left:1156px;top:772px"></div><div class="dot" style="left:1160px;top:772px"></div>
<div class="dot" style="left:1156px;top:776px"></div><div class="dot" style="left:1160px;top:776px"></div>
<div class="dot" style="left:1156px;top:780px"></div><div class="dot" style="left:1160px;top:780px"></div>
<div class="dot" style="left:1156px;top:784px"></div><div class="dot" style="left:1160px;top:784px"></div>
<div class="dot" style="left:1156px;top:788px"></div><div class="dot" style="left:1160px;top:788px"></div>
<div class="dot" style="left:1156px;top:792px"></div><div class="dot" style="left:1160px;top:792px"></div>
<div class="dot" style="left:1156px;top:796px"></div><div class="dot" style="left:1160px;top:796px"></div>
<div class="dot" style="left:1156px;top:800px"></div><div class="dot" style="left:1160px;top:800px"></div>
<div class="dot" style="left:1156px;top:804px"></div><div class="dot" style="left:1160px;top:804px"></div>
<div class="dot" style="left:1156px;top:808px"></div><div class="dot" style="left:1160px;top:808px"></div>
<div class="dot" style="left:1156px;top:812px"></div><div class="dot" style="left:1160px;top:812px"></div>
<div class="dot" style="left:1156px;top:816px"></div><div class="dot" style="left:1160px;top:816px"></div>
<div class="dot" style="left:1156px;top:820px"></div><div class="dot" style="left:1160px;top:820px"></div>
<div class="dot" style="left:1156px;top:824px"></div><div class="dot" style="left:1160px;top:824px"></div>
<div class="dot" style="left:1156px;top:828px"></div><div class="dot" style="left:1160px;top:828px"></div>
<div class="dot" style="left:1156px;top:832px"></div><div class="dot" style="left:1160px;top:832px"></div>
<div class="dot" style="left:1156px;top:836px"></div><div class="dot" style="left:1160px;top:836px"></div>
<div class="dot" style="left:1156px;top:840px"></div><div class="dot" style="left:1160px;top:840px"></div>
<div class="dot" style="left:1156px;top:844px"></div><div class="dot" style="left:1160px;top:844px"></div>
<div class="dot" style="left:1156px;top:848px"></div><div class="dot" style="left:1160px;top:848px"></div>
<div class="dot" style="left:1156px;top:852px"></div><div class="dot" style="left:1160px;top:852px"></div>
<div class="dot" style="left:1156px;top:856px"></div><div class="dot" style="left:1160px;top:856px"></div>
<div class="dot" style="left:1156px;top:860px"></div><div class="dot" style="left:1160px;top:860px"></div>
<div class="dot" style="left:1156px;top:864px"></div><div class="dot" style="left:1160px;top:864px"></div>
<div class="dot" style="left:1156px;top:868px"></div><div class="dot" style="left:1160px;top:868px"></div>
<div class="dot" style="left:1156px;top:872px"></div><div class="dot" style="left:1160px;top:872px"></div>
<div class="dot" style="left:1156px;top:876px"></div><div class="dot" style="left:1160px;top:876px"></div>
<div class="dot" style="left:1156px;top:880px"></div><div class="dot" style="left:1160px;top:880px"></div>
<div class="dot" style="left:1156px;top:884px"></div><div class="dot" style="left:1160px;top:884px"></div>
<div class="dot" style="left:1156px;top:888px"></div><div class="dot" style="left:1160px;top:888px"></div>
<div class="dot" style="left:1156px;top:892px"></div><div class="dot" style="left:1160px;top:892px"></div>
<div class="dot" style="left:1156px;top:896px"></div><div class="dot" style="left:1160px;top:896px"></div>
<div class="dot" style="left:1156px;top:900px"></div><div class="dot" style="left:1160px;top:900px"></div>
<div class="dot" style="left:1156px;top:904px"></div><div class="dot" style="left:1160px;top:904px"></div>
<div class="dot" style="left:1156px;top:908px"></div><div class="dot" style="left:1160px;top:908px"></div>
<div class="dot" style="left:1156px;top:912px"></div><div class="dot" style="left:1160px;top:912px"></div>
<svg style="position:absolute;left:1155px;top:5px" width="6" height="8" viewBox="0 0 6 8"><path d="M5 0 L5 7.5 L0.5 3.75 Z" fill="#000"/></svg>
</body></html>
